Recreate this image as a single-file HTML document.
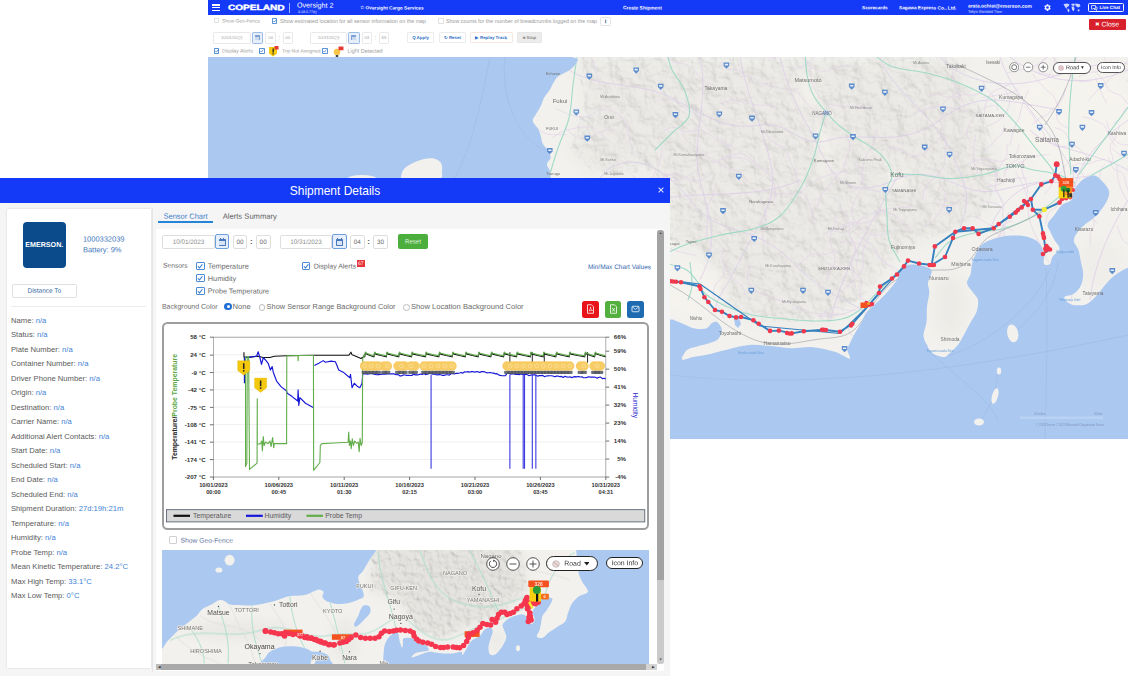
<!DOCTYPE html>
<html lang="en"><head><meta charset="utf-8"><title>Shipment Details</title>
<style>
html,body{margin:0;padding:0;background:#fff;}
body{width:1128px;height:676px;position:relative;overflow:hidden;font-family:"Liberation Sans",sans-serif;}
.t{position:absolute;left:0;top:0;white-space:nowrap;line-height:1;}
.b{position:absolute;display:block;}
svg{overflow:hidden;}
</style></head>
<body>
<!-- background application -->
<div class="b" style="left:208.00px;top:0.00px;width:920.00px;height:15.00px;background:#1439f7;"></div>
<div class="b" style="left:212.00px;top:4.20px;width:8.00px;height:1.50px;background:#fff;"></div>
<div class="b" style="left:212.00px;top:6.90px;width:8.00px;height:1.50px;background:#fff;"></div>
<div class="b" style="left:212.00px;top:9.60px;width:8.00px;height:1.50px;background:#fff;"></div>
<span class="t" style="transform-origin:0 0;transform:translate(228.00px,3.60px) scale(0.1656,0.1250) rotate(0.25deg);font-size:60.80px;color:#fff;font-weight:bold;-webkit-text-stroke:3px #fff;">COPELAND</span>
<div class="b" style="left:288.60px;top:2.50px;width:0.80px;height:10.50px;background:rgba(255,255,255,.6);"></div>
<span class="t" style="transform-origin:0 0;transform:translate(297.00px,1.54px) scale(0.1250,0.1250) rotate(0.25deg);font-size:57.12px;color:#fff;">Oversight 2</span>
<span class="t" style="transform-origin:0 0;transform:translate(298.00px,10.06px) scale(0.1250,0.1250) rotate(0.25deg);font-size:28.80px;color:#e4e9ff;">3.28.5.7782</span>
<span class="t" style="transform-origin:0 0;transform:translate(360.00px,5.33px) scale(0.1250,0.1250) rotate(0.25deg);font-size:38.00px;color:#fff;font-weight:bold;">☆ Oversight Cargo Services</span>
<span class="t" style="transform-origin:0 0;transform:translate(623.00px,5.25px) scale(0.1250,0.1250) rotate(0.25deg);font-size:39.28px;color:#fff;font-weight:bold;">Create Shipment</span>
<span class="t" style="transform-origin:0 0;transform:translate(862.00px,5.35px) scale(0.1250,0.1250) rotate(0.25deg);font-size:37.76px;color:#fff;font-weight:bold;">Scorecards</span>
<span class="t" style="transform-origin:0 0;transform:translate(899.00px,5.35px) scale(0.1250,0.1250) rotate(0.25deg);font-size:37.76px;color:#fff;font-weight:bold;">Sagawa Express Co., Ltd.</span>
<span class="t" style="transform-origin:0 0;transform:translate(968.00px,3.35px) scale(0.1250,0.1250) rotate(0.25deg);font-size:39.28px;color:#fff;font-weight:bold;">arata.ochiai@emerson.com</span>
<span class="t" style="transform-origin:0 0;transform:translate(968.00px,9.75px) scale(0.1250,0.1250) rotate(0.25deg);font-size:28.96px;color:#e8ecff;">Tokyo Standard Time</span>
<svg class="b" style="left:1042.5px;top:3px;width:9px;height:9px" viewBox="0 0 24 24"><path fill="#fff" d="M19.4 13a7.5 7.5 0 0 0 0-2l2.1-1.6-2-3.5-2.5 1a7.6 7.6 0 0 0-1.7-1L15 3h-4l-.4 2.9a7.6 7.6 0 0 0-1.700 1l-2.500-1-2 3.500L6.600 11a7.500 7.500 0 0 0 0 2l-2.100 1.600 2 3.500 2.500-1a7.600 7.600 0 0 0 1.700 1L11 21h4l.4-2.900a7.600 7.600 0 0 0 1.700-1l2.500 1 2-3.500zM13 15.500a3.500 3.500 0 1 1 0-7 3.500 3.500 0 0 1 0 7z" transform="translate(-1,0)"/></svg>
<svg class="b" style="left:1063px;top:3px;width:18px;height:10px" viewBox="0 0 36 20"><g fill="#c9d3ff"><path d="M1 2l8-1 4 2-2 4-3 1-1 4-3-4z"/><path d="M9 11l3 1 1 4-2 3-2-4z"/><path d="M16 2l6-1 2 3-3 2-3-1z"/><path d="M17 7l5 0 1 5-2 5-3-4z"/><path d="M24 1l9 1 2 4-4 3-3-1-3-3z"/><path d="M29 13l4 0 0 3-3 1z"/></g></svg>
<div class="b" style="left:1087.50px;top:2.50px;width:36.50px;height:9.90px;border:0.8px solid #fff;border-radius:1.5px;box-sizing:border-box;"></div>
<span class="t" style="transform-origin:0 0;transform:translate(1099.50px,5.24px) scale(0.1250,0.1250) rotate(0.25deg);font-size:36.40px;color:#fff;font-weight:bold;">Live Chat</span>
<svg class="b" style="left:1091px;top:4.6px;width:6.5px;height:6px" viewBox="0 0 13 12"><path fill="none" stroke="#fff" stroke-width="1.4" d="M1 1h8v6H4l-2 2V7H1zM10 4h2v5h-1v2l-2-2H6"/></svg>
<div class="b" style="left:1088.70px;top:19.00px;width:37.30px;height:10.80px;background:#d7202c;border-radius:1px;"></div>
<span class="t" style="transform-origin:0 0;transform:translate(1095.00px,21.53px) scale(0.1250,0.1250) rotate(0.25deg);font-size:44.00px;color:#fff;">✖</span>
<span class="t" style="transform-origin:0 0;transform:translate(1101.50px,20.80px) scale(0.1250,0.1250) rotate(0.25deg);font-size:54.80px;color:#fff;">Close</span>
<div class="b" style="left:213.80px;top:18.30px;width:5.20px;height:5.20px;border:0.7px solid #e0e0e0;box-sizing:border-box;border-radius:0.8px;background:#fff;"></div>
<span class="t" style="transform-origin:0 0;transform:translate(222.00px,18.36px) scale(0.1250,0.1250) rotate(0.25deg);font-size:39.04px;color:#9a9a9a;">Show Geo-Fence</span>
<div class="b" style="left:271.80px;top:18.30px;width:5.60px;height:5.60px;border:0.7px solid #5b93d8;box-sizing:border-box;border-radius:0.8px;background:#fff;"></div><svg class="b" style="left:271.80px;top:18.30px;width:5.60px;height:5.60px" viewBox="0 0 10 10"><path d="M2.300 5.200l2 2 3.500-4.400" fill="none" stroke="#2f78d0" stroke-width="1.300"/></svg>
<span class="t" style="transform-origin:0 0;transform:translate(280.00px,18.12px) scale(0.1250,0.1250);font-size:42.72px;color:#9a9a9a;">Show estimated location for all sensor information on the map</span>
<div class="b" style="left:438.00px;top:18.30px;width:5.60px;height:5.60px;border:0.7px solid #e0e0e0;box-sizing:border-box;border-radius:0.8px;background:#fff;"></div>
<span class="t" style="transform-origin:0 0;transform:translate(446.00px,18.12px) scale(0.1250,0.1250);font-size:42.72px;color:#9a9a9a;">Show counts for the number of breadcrumbs logged on the map</span>
<div class="b" style="left:600.00px;top:17.00px;width:11.00px;height:9.00px;border:0.6px solid #e3e3e3;border-radius:1.5px;box-sizing:border-box;"></div>
<span class="t" style="transform-origin:50% 0;transform:translate(605.50px,18.26px) translateX(-50%) scale(0.1250,0.1250) rotate(0.25deg);font-size:48.00px;color:#3b5a8c;font-weight:bold;font-family:"Liberation Serif",serif;">i</span>
<div class="b" style="left:213.00px;top:32.00px;width:37.50px;height:11.60px;border:0.6px solid #e9e9e9;border-radius:1.2px;box-sizing:border-box;background:#fff;"></div><span class="t" style="transform-origin:50% 0;transform:translate(231.75px,35.48px) translateX(-50%) scale(0.1250,0.1250) rotate(0.25deg);font-size:34.40px;color:#a5a5a5;">10/01/2023</span>
<div class="b" style="left:251.60px;top:31.50px;width:11.40px;height:12.50px;border:0.7px solid #9dbde6;border-radius:1.2px;box-sizing:border-box;background:#e6eefa;"></div><div class="b" style="left:254.70px;top:35.45px;width:5.20px;height:5.00px;background:#7d9fd4;border-radius:0.6px;"></div><div class="b" style="left:255.30px;top:36.85px;width:4.00px;height:3.00px;background:#c9d9f0;"></div>
<div class="b" style="left:265.40px;top:32.00px;width:10.60px;height:11.60px;border:0.6px solid #e9e9e9;border-radius:1.2px;box-sizing:border-box;background:#fff;"></div><span class="t" style="transform-origin:50% 0;transform:translate(270.70px,35.48px) translateX(-50%) scale(0.1250,0.1250) rotate(0.25deg);font-size:34.40px;color:#a5a5a5;">00</span>
<span class="t" style="transform-origin:50% 0;transform:translate(279.30px,35.10px) translateX(-50%) scale(0.1250,0.1250) rotate(0.25deg);font-size:40.00px;color:#777;">:</span>
<div class="b" style="left:282.50px;top:32.00px;width:10.50px;height:11.60px;border:0.6px solid #e9e9e9;border-radius:1.2px;box-sizing:border-box;background:#fff;"></div><span class="t" style="transform-origin:50% 0;transform:translate(287.75px,35.48px) translateX(-50%) scale(0.1250,0.1250) rotate(0.25deg);font-size:34.40px;color:#a5a5a5;">00</span>
<div class="b" style="left:309.70px;top:32.00px;width:37.70px;height:11.60px;border:0.6px solid #e9e9e9;border-radius:1.2px;box-sizing:border-box;background:#fff;"></div><span class="t" style="transform-origin:50% 0;transform:translate(328.55px,35.48px) translateX(-50%) scale(0.1250,0.1250) rotate(0.25deg);font-size:34.40px;color:#a5a5a5;">10/31/2023</span>
<div class="b" style="left:348.00px;top:31.50px;width:11.50px;height:12.50px;border:0.7px solid #9dbde6;border-radius:1.2px;box-sizing:border-box;background:#e6eefa;"></div><div class="b" style="left:351.15px;top:35.45px;width:5.20px;height:5.00px;background:#7d9fd4;border-radius:0.6px;"></div><div class="b" style="left:351.75px;top:36.85px;width:4.00px;height:3.00px;background:#c9d9f0;"></div>
<div class="b" style="left:361.60px;top:32.00px;width:10.40px;height:11.60px;border:0.6px solid #e9e9e9;border-radius:1.2px;box-sizing:border-box;background:#fff;"></div><span class="t" style="transform-origin:50% 0;transform:translate(366.80px,35.48px) translateX(-50%) scale(0.1250,0.1250) rotate(0.25deg);font-size:34.40px;color:#a5a5a5;">03</span>
<span class="t" style="transform-origin:50% 0;transform:translate(375.50px,35.10px) translateX(-50%) scale(0.1250,0.1250) rotate(0.25deg);font-size:40.00px;color:#777;">:</span>
<div class="b" style="left:379.00px;top:32.00px;width:10.00px;height:11.60px;border:0.6px solid #e9e9e9;border-radius:1.2px;box-sizing:border-box;background:#fff;"></div><span class="t" style="transform-origin:50% 0;transform:translate(384.00px,35.48px) translateX(-50%) scale(0.1250,0.1250) rotate(0.25deg);font-size:34.40px;color:#a5a5a5;">59</span>
<div class="b" style="left:407.00px;top:32.00px;width:27.00px;height:11.30px;border:0.6px solid #ebebeb;border-radius:1.2px;box-sizing:border-box;background:#fff;"></div><span class="t" style="transform-origin:50% 0;transform:translate(420.50px,35.32px) translateX(-50%) scale(0.1250,0.1250) rotate(0.25deg);font-size:35.20px;color:#2f6fc4;font-weight:bold;">Q Apply</span>
<div class="b" style="left:439.00px;top:32.00px;width:27.00px;height:11.30px;border:0.6px solid #ebebeb;border-radius:1.2px;box-sizing:border-box;background:#fff;"></div><span class="t" style="transform-origin:50% 0;transform:translate(452.50px,35.32px) translateX(-50%) scale(0.1250,0.1250) rotate(0.25deg);font-size:35.20px;color:#2f6fc4;font-weight:bold;">↻ Reset</span>
<div class="b" style="left:470.00px;top:32.00px;width:42.50px;height:11.30px;border:0.6px solid #f5e6e0;border-radius:1.2px;box-sizing:border-box;background:#fff;"></div><span class="t" style="transform-origin:50% 0;transform:translate(491.25px,35.32px) translateX(-50%) scale(0.1250,0.1250) rotate(0.25deg);font-size:35.20px;color:#2f6fc4;font-weight:bold;">▶ Replay Track</span>
<div class="b" style="left:517.00px;top:32.00px;width:25.00px;height:11.30px;border:0.6px solid #e6e6e6;border-radius:1.2px;box-sizing:border-box;background:#ececec;"></div><span class="t" style="transform-origin:50% 0;transform:translate(529.50px,35.32px) translateX(-50%) scale(0.1250,0.1250) rotate(0.25deg);font-size:35.20px;color:#8a8a8a;font-weight:bold;">■ Stop</span>
<div class="b" style="left:213.60px;top:48.30px;width:5.60px;height:5.60px;border:0.7px solid #5b93d8;box-sizing:border-box;border-radius:0.8px;background:#fff;"></div><svg class="b" style="left:213.60px;top:48.30px;width:5.60px;height:5.60px" viewBox="0 0 10 10"><path d="M2.300 5.200l2 2 3.500-4.400" fill="none" stroke="#2f78d0" stroke-width="1.300"/></svg>
<span class="t" style="transform-origin:0 0;transform:translate(222.00px,48.24px) scale(0.1250,0.1250) rotate(0.25deg);font-size:40.96px;color:#9a9a9a;">Display Alerts</span>
<div class="b" style="left:259.00px;top:48.30px;width:5.60px;height:5.60px;border:0.7px solid #5b93d8;box-sizing:border-box;border-radius:0.8px;background:#fff;"></div><svg class="b" style="left:259.00px;top:48.30px;width:5.60px;height:5.60px" viewBox="0 0 10 10"><path d="M2.300 5.200l2 2 3.500-4.400" fill="none" stroke="#2f78d0" stroke-width="1.300"/></svg>
<svg class="b" style="left:267.500px;top:46.200px;width:11px;height:11.500px" viewBox="0 0 22 23"><path d="M2 2h16v13l-8 6-8-6z" fill="#f5c90f"/><rect x="9" y="5" width="2.600" height="8" fill="#222"/><rect x="9" y="14.500" width="2.600" height="2.400" fill="#222"/><rect x="13" y="0" width="8" height="7" fill="#e53935"/></svg>
<span class="t" style="transform-origin:0 0;transform:translate(282.00px,48.35px) scale(0.1250,0.1250) rotate(0.25deg);font-size:39.20px;color:#9a9a9a;">Trip Not Assigned</span>
<div class="b" style="left:322.00px;top:48.30px;width:5.60px;height:5.60px;border:0.7px solid #5b93d8;box-sizing:border-box;border-radius:0.8px;background:#fff;"></div><svg class="b" style="left:322.00px;top:48.30px;width:5.60px;height:5.60px" viewBox="0 0 10 10"><path d="M2.300 5.200l2 2 3.500-4.400" fill="none" stroke="#2f78d0" stroke-width="1.300"/></svg>
<svg class="b" style="left:331.500px;top:45.800px;width:12px;height:12.500px" viewBox="0 0 24 25"><circle cx="10" cy="12" r="6.500" fill="#f7c64a"/><rect x="7.500" y="18" width="5" height="4.500" fill="#444"/><rect x="13" y="1" width="10" height="7.500" rx="1" fill="#e53935"/></svg>
<span class="t" style="transform-origin:0 0;transform:translate(347.50px,48.07px) scale(0.1250,0.1250) rotate(0.25deg);font-size:43.44px;color:#9a9a9a;">Light Detected</span>
<!-- main map -->
<svg class="b" style="left:208px;top:57px;width:920px;height:382px" viewBox="208 57 920 382">
<defs><filter id="bl" x="-20%" y="-20%" width="140%" height="140%"><feGaussianBlur stdDeviation="7"/></filter><filter id="bl2" x="-20%" y="-20%" width="140%" height="140%"><feGaussianBlur stdDeviation="3"/></filter>
<filter id="relief" x="0" y="0" width="100%" height="100%"><feTurbulence type="fractalNoise" baseFrequency="0.07" numOctaves="4" seed="7" result="n"/><feDiffuseLighting in="n" surfaceScale="5" lighting-color="#fff" result="l"><feDistantLight azimuth="315" elevation="62"/></feDiffuseLighting><feComposite in="l" in2="SourceGraphic" operator="in"/></filter>
<clipPath id="landclip"><path d="M584.0 40.0C679.3 35.0 1055.7 -7.0 1150.0 30.0C1244.3 67.0 1153.7 222.4 1150.0 262.0C1146.3 301.6 1134.0 265.4 1128.0 267.7C1122.0 270.0 1117.9 273.0 1114.0 276.0C1110.1 279.0 1107.8 281.9 1104.6 285.5C1101.4 289.1 1098.2 294.2 1095.0 297.3C1091.8 300.4 1089.5 303.2 1085.6 304.4C1081.7 305.6 1075.0 305.6 1071.4 304.4C1067.9 303.2 1063.9 299.1 1064.3 297.3C1064.7 295.5 1071.0 295.8 1073.8 293.8C1076.6 291.8 1079.3 288.9 1080.9 285.5C1082.5 282.1 1083.2 277.6 1083.2 273.7C1083.2 269.8 1081.7 265.8 1080.9 261.8C1080.1 257.9 1079.7 253.6 1078.5 250.0C1077.3 246.4 1073.8 243.7 1073.8 240.5C1073.8 237.3 1076.5 233.8 1078.5 231.0C1080.5 228.2 1082.8 226.4 1085.6 224.0C1088.3 221.6 1091.8 220.0 1095.0 216.8C1098.2 213.6 1102.2 209.0 1104.6 205.0C1107.0 201.0 1109.3 196.6 1109.3 193.0C1109.3 189.4 1107.0 186.6 1104.6 183.7C1102.2 180.8 1098.2 176.4 1095.0 175.4C1091.8 174.4 1088.3 176.4 1085.6 177.8C1082.8 179.2 1080.5 181.5 1078.5 183.7C1076.5 185.9 1075.0 188.1 1073.8 190.8C1072.6 193.5 1073.4 197.6 1071.4 200.0C1069.4 202.4 1064.8 202.6 1062.0 205.0C1059.2 207.4 1057.2 211.3 1054.8 214.5C1052.4 217.7 1048.5 221.2 1047.7 224.0C1046.9 226.8 1048.8 228.2 1050.0 231.0C1051.2 233.8 1053.2 237.5 1054.8 240.5C1056.4 243.5 1060.0 246.1 1059.6 248.8C1059.2 251.6 1054.0 254.5 1052.4 257.0C1050.8 259.5 1051.4 262.8 1050.0 264.0C1048.6 265.2 1045.0 265.6 1044.0 264.0C1043.0 262.4 1044.6 257.9 1044.0 254.7C1043.4 251.5 1042.3 247.6 1040.6 245.0C1038.8 242.4 1036.7 240.5 1033.5 239.0C1030.3 237.5 1026.0 236.3 1021.7 235.8C1017.4 235.3 1012.3 235.3 1007.5 235.8C1002.7 236.3 997.4 237.5 993.0 239.0C988.6 240.5 984.3 242.4 981.4 245.0C978.5 247.6 977.1 251.5 975.5 254.7C973.9 257.9 972.8 260.8 972.0 264.0C971.2 267.2 971.5 270.5 970.7 273.7C969.9 276.9 966.6 279.9 967.0 283.0C967.4 286.1 971.2 289.8 973.0 292.6C974.8 295.4 977.3 296.6 977.9 299.7C978.5 302.8 977.7 308.1 976.7 311.5C975.7 314.9 973.6 317.1 972.0 320.0C970.4 322.9 969.2 325.1 967.0 329.0C964.8 332.9 961.6 339.7 958.8 343.7C956.0 347.7 952.5 350.8 950.0 353.0C947.5 355.2 947.0 357.0 944.0 357.0C941.0 357.0 934.8 355.0 932.0 353.0C929.2 351.0 928.4 347.9 927.0 345.0C925.6 342.1 923.6 339.2 923.5 335.4C923.4 331.6 925.9 326.8 926.5 322.0C927.1 317.2 926.5 311.7 927.0 306.8C927.5 301.9 929.1 296.6 929.3 292.6C929.5 288.6 927.6 286.6 928.0 283.0C928.4 279.4 932.2 273.8 931.7 271.0C931.2 268.2 927.8 267.6 925.0 266.5C922.2 265.4 918.2 264.7 915.0 264.5C911.8 264.3 908.4 264.4 906.0 265.5C903.6 266.6 902.4 268.4 900.7 271.0C899.0 273.6 898.2 277.8 896.0 281.3C893.8 284.8 890.6 288.4 887.4 292.0C884.2 295.6 880.4 299.1 876.8 302.6C873.2 306.1 868.5 310.0 866.0 313.2C863.5 316.4 863.6 318.5 861.9 321.7C860.1 324.9 857.3 329.1 855.5 332.3C853.7 335.5 852.3 338.0 851.0 340.9C849.7 343.8 847.7 346.5 847.5 349.4C847.3 352.3 850.9 357.6 850.0 358.5C849.1 359.4 844.7 356.2 842.0 355.0C839.3 353.8 838.8 352.8 834.0 351.5C829.2 350.2 820.0 347.7 813.0 347.2C806.0 346.7 798.8 348.5 791.7 348.3C784.6 348.1 777.5 346.6 770.4 346.0C763.3 345.4 756.1 344.4 749.0 345.0C741.9 345.6 734.9 347.8 727.8 349.4C720.7 351.0 712.3 353.4 706.5 354.7C700.7 356.0 697.1 356.2 693.0 357.0C688.9 357.8 683.0 360.7 682.0 359.5C681.0 358.3 684.5 352.2 687.0 350.0C689.5 347.8 693.8 347.5 697.0 346.5C700.2 345.5 703.2 345.1 706.5 344.0C709.8 342.9 714.6 341.7 717.0 340.0C719.4 338.3 720.3 336.0 721.0 334.0C721.7 332.0 722.1 330.0 721.4 328.0C720.7 326.0 718.6 322.8 717.0 322.0C715.4 321.2 713.7 322.0 712.0 323.0C710.3 324.0 709.0 327.0 707.0 328.0C705.0 329.0 702.5 329.1 700.0 329.0C697.5 328.9 694.5 328.6 691.7 327.7C688.9 326.8 685.6 324.9 683.0 323.8C680.4 322.7 678.1 321.7 676.0 321.0C673.9 320.3 674.7 319.4 670.4 319.6C666.1 319.8 655.1 331.9 650.0 322.0C644.9 312.1 648.3 277.8 640.0 260.0C631.7 242.2 614.5 225.0 600.0 215.0C585.5 205.0 561.2 206.9 553.0 200.0C544.8 193.1 551.6 179.5 550.6 173.6C549.6 167.7 547.0 167.4 547.0 164.7C547.0 162.0 550.4 160.0 550.6 157.6C550.8 155.2 549.3 152.9 548.0 150.5C546.7 148.1 543.8 145.8 542.6 143.4C541.4 141.0 541.5 138.4 540.8 136.0C540.1 133.6 539.5 131.5 538.2 129.0C536.9 126.5 533.2 123.3 532.8 121.0C532.3 118.7 534.2 117.5 535.5 115.0C536.8 112.5 539.3 109.0 540.8 106.0C542.3 103.0 542.9 100.0 544.4 97.3C545.9 94.6 548.2 92.4 549.7 90.0C551.2 87.6 551.8 85.3 553.3 83.0C554.8 80.7 555.6 78.3 558.6 76.0C561.6 73.7 567.8 71.6 571.0 68.9C574.2 66.2 575.8 64.8 578.0 60.0C580.2 55.2 488.7 45.0 584.0 40.0Z"/></clipPath></defs>
<rect x="208" y="57" width="920" height="382" fill="#abc8f0"/>
<g fill="none" stroke="#9ab9e6" stroke-width="0.6" opacity=".8"><path d="M505 57C500 100 520 140 545 150"/><path d="M490 57C480 110 470 150 455 178"/><path d="M930 352C960 380 990 400 998 420"/><path d="M946 356C990 345 1040 300 1050 268"/><path d="M1012 335C1040 310 1055 290 1058 262"/><path d="M998 371L994 398L980 422"/><path d="M670 375C760 385 900 385 1128 335"/><path d="M1046 268C1048 330 1046 400 1045 439"/></g>
<path d="M584.0 40.0C679.3 35.0 1055.7 -7.0 1150.0 30.0C1244.3 67.0 1153.7 222.4 1150.0 262.0C1146.3 301.6 1134.0 265.4 1128.0 267.7C1122.0 270.0 1117.9 273.0 1114.0 276.0C1110.1 279.0 1107.8 281.9 1104.6 285.5C1101.4 289.1 1098.2 294.2 1095.0 297.3C1091.8 300.4 1089.5 303.2 1085.6 304.4C1081.7 305.6 1075.0 305.6 1071.4 304.4C1067.9 303.2 1063.9 299.1 1064.3 297.3C1064.7 295.5 1071.0 295.8 1073.8 293.8C1076.6 291.8 1079.3 288.9 1080.9 285.5C1082.5 282.1 1083.2 277.6 1083.2 273.7C1083.2 269.8 1081.7 265.8 1080.9 261.8C1080.1 257.9 1079.7 253.6 1078.5 250.0C1077.3 246.4 1073.8 243.7 1073.8 240.5C1073.8 237.3 1076.5 233.8 1078.5 231.0C1080.5 228.2 1082.8 226.4 1085.6 224.0C1088.3 221.6 1091.8 220.0 1095.0 216.8C1098.2 213.6 1102.2 209.0 1104.6 205.0C1107.0 201.0 1109.3 196.6 1109.3 193.0C1109.3 189.4 1107.0 186.6 1104.6 183.7C1102.2 180.8 1098.2 176.4 1095.0 175.4C1091.8 174.4 1088.3 176.4 1085.6 177.8C1082.8 179.2 1080.5 181.5 1078.5 183.7C1076.5 185.9 1075.0 188.1 1073.8 190.8C1072.6 193.5 1073.4 197.6 1071.4 200.0C1069.4 202.4 1064.8 202.6 1062.0 205.0C1059.2 207.4 1057.2 211.3 1054.8 214.5C1052.4 217.7 1048.5 221.2 1047.7 224.0C1046.9 226.8 1048.8 228.2 1050.0 231.0C1051.2 233.8 1053.2 237.5 1054.8 240.5C1056.4 243.5 1060.0 246.1 1059.6 248.8C1059.2 251.6 1054.0 254.5 1052.4 257.0C1050.8 259.5 1051.4 262.8 1050.0 264.0C1048.6 265.2 1045.0 265.6 1044.0 264.0C1043.0 262.4 1044.6 257.9 1044.0 254.7C1043.4 251.5 1042.3 247.6 1040.6 245.0C1038.8 242.4 1036.7 240.5 1033.5 239.0C1030.3 237.5 1026.0 236.3 1021.7 235.8C1017.4 235.3 1012.3 235.3 1007.5 235.8C1002.7 236.3 997.4 237.5 993.0 239.0C988.6 240.5 984.3 242.4 981.4 245.0C978.5 247.6 977.1 251.5 975.5 254.7C973.9 257.9 972.8 260.8 972.0 264.0C971.2 267.2 971.5 270.5 970.7 273.7C969.9 276.9 966.6 279.9 967.0 283.0C967.4 286.1 971.2 289.8 973.0 292.6C974.8 295.4 977.3 296.6 977.9 299.7C978.5 302.8 977.7 308.1 976.7 311.5C975.7 314.9 973.6 317.1 972.0 320.0C970.4 322.9 969.2 325.1 967.0 329.0C964.8 332.9 961.6 339.7 958.8 343.7C956.0 347.7 952.5 350.8 950.0 353.0C947.5 355.2 947.0 357.0 944.0 357.0C941.0 357.0 934.8 355.0 932.0 353.0C929.2 351.0 928.4 347.9 927.0 345.0C925.6 342.1 923.6 339.2 923.5 335.4C923.4 331.6 925.9 326.8 926.5 322.0C927.1 317.2 926.5 311.7 927.0 306.8C927.5 301.9 929.1 296.6 929.3 292.6C929.5 288.6 927.6 286.6 928.0 283.0C928.4 279.4 932.2 273.8 931.7 271.0C931.2 268.2 927.8 267.6 925.0 266.5C922.2 265.4 918.2 264.7 915.0 264.5C911.8 264.3 908.4 264.4 906.0 265.5C903.6 266.6 902.4 268.4 900.7 271.0C899.0 273.6 898.2 277.8 896.0 281.3C893.8 284.8 890.6 288.4 887.4 292.0C884.2 295.6 880.4 299.1 876.8 302.6C873.2 306.1 868.5 310.0 866.0 313.2C863.5 316.4 863.6 318.5 861.9 321.7C860.1 324.9 857.3 329.1 855.5 332.3C853.7 335.5 852.3 338.0 851.0 340.9C849.7 343.8 847.7 346.5 847.5 349.4C847.3 352.3 850.9 357.6 850.0 358.5C849.1 359.4 844.7 356.2 842.0 355.0C839.3 353.8 838.8 352.8 834.0 351.5C829.2 350.2 820.0 347.7 813.0 347.2C806.0 346.7 798.8 348.5 791.7 348.3C784.6 348.1 777.5 346.6 770.4 346.0C763.3 345.4 756.1 344.4 749.0 345.0C741.9 345.6 734.9 347.8 727.8 349.4C720.7 351.0 712.3 353.4 706.5 354.7C700.7 356.0 697.1 356.2 693.0 357.0C688.9 357.8 683.0 360.7 682.0 359.5C681.0 358.3 684.5 352.2 687.0 350.0C689.5 347.8 693.8 347.5 697.0 346.5C700.2 345.5 703.2 345.1 706.5 344.0C709.8 342.9 714.6 341.7 717.0 340.0C719.4 338.3 720.3 336.0 721.0 334.0C721.7 332.0 722.1 330.0 721.4 328.0C720.7 326.0 718.6 322.8 717.0 322.0C715.4 321.2 713.7 322.0 712.0 323.0C710.3 324.0 709.0 327.0 707.0 328.0C705.0 329.0 702.5 329.1 700.0 329.0C697.5 328.9 694.5 328.6 691.7 327.7C688.9 326.8 685.6 324.9 683.0 323.8C680.4 322.7 678.1 321.7 676.0 321.0C673.9 320.3 674.7 319.4 670.4 319.6C666.1 319.8 655.1 331.9 650.0 322.0C644.9 312.1 648.3 277.8 640.0 260.0C631.7 242.2 614.5 225.0 600.0 215.0C585.5 205.0 561.2 206.9 553.0 200.0C544.8 193.1 551.6 179.5 550.6 173.6C549.6 167.7 547.0 167.4 547.0 164.7C547.0 162.0 550.4 160.0 550.6 157.6C550.8 155.2 549.3 152.9 548.0 150.5C546.7 148.1 543.8 145.8 542.6 143.4C541.4 141.0 541.5 138.4 540.8 136.0C540.1 133.6 539.5 131.5 538.2 129.0C536.9 126.5 533.2 123.3 532.8 121.0C532.3 118.7 534.2 117.5 535.5 115.0C536.8 112.5 539.3 109.0 540.8 106.0C542.3 103.0 542.9 100.0 544.4 97.3C545.9 94.6 548.2 92.4 549.7 90.0C551.2 87.6 551.8 85.3 553.3 83.0C554.8 80.7 555.6 78.3 558.6 76.0C561.6 73.7 567.8 71.6 571.0 68.9C574.2 66.2 575.8 64.8 578.0 60.0C580.2 55.2 488.7 45.0 584.0 40.0Z" fill="#f2f1ed"/>
<g clip-path="url(#landclip)">
<g filter="url(#bl)" fill="#ebeae6" opacity=".95">
<path d="M575 57L960 57L985 120L1000 170L985 215L940 235L900 250L870 290L830 322L760 322L715 300L700 255L670 240L655 170L600 178L570 150L585 100Z"/>
<ellipse cx="950" cy="305" rx="14" ry="30"/>
<ellipse cx="1100" cy="265" rx="18" ry="22" opacity=".5"/>
</g>
<g opacity=".26" style="mix-blend-mode:multiply"><path filter="url(#relief)" d="M575 57L960 57L985 120L1000 170L985 215L940 235L900 250L870 290L830 322L760 322L715 300L700 255L670 240L655 170L600 178L570 150L585 100Z" fill="#000"/></g>
<g filter="url(#bl)" fill="#f5f3ee"><ellipse cx="1075" cy="120" rx="60" ry="60"/><ellipse cx="897" cy="178" rx="14" ry="10"/><ellipse cx="808" cy="90" rx="8" ry="22"/><ellipse cx="690" cy="290" rx="35" ry="28"/><ellipse cx="826" cy="150" rx="6" ry="30"/></g>
<g fill="none" stroke="#e3d2e8" stroke-width="0.750" opacity=".9">
<path d="M817.0 209.8C817.4 207.8 818.0 201.6 819.7 198.0C821.4 194.4 824.6 191.6 827.0 188.3C829.5 185.0 831.5 181.5 834.1 178.4C836.7 175.3 840.5 173.1 842.6 169.7C844.7 166.3 845.4 162.1 846.6 158.2C847.8 154.4 849.8 150.4 849.8 146.5C849.9 142.6 847.4 136.6 846.9 134.7"/>
<path d="M866.0 300.1C864.3 301.5 859.8 306.5 856.1 308.7C852.4 311.0 848.0 312.5 843.9 313.7C839.7 314.9 835.2 315.6 830.9 315.9C826.5 316.3 819.9 316.0 817.7 316.0"/>
<path d="M1032.4 74.2C1033.5 75.6 1036.8 79.5 1039.1 82.1C1041.4 84.6 1043.8 87.2 1046.2 89.6C1048.7 92.0 1052.1 93.7 1053.9 96.5C1055.8 99.2 1057.0 104.5 1057.6 106.1"/>
<path d="M854.9 231.8C856.0 232.8 859.1 236.1 861.5 238.0C863.8 239.9 866.4 241.4 868.8 243.2C871.2 245.0 874.2 246.6 875.8 249.0C877.3 251.4 876.7 255.2 878.2 257.7C879.8 260.1 882.5 262.0 885.1 263.6C887.6 265.1 891.0 265.3 893.5 266.8C896.0 268.4 899.1 271.8 900.2 272.8"/>
<path d="M851.3 65.1C848.9 65.5 841.8 66.1 837.1 67.1C832.4 68.2 827.9 71.5 823.4 71.4C818.8 71.3 813.7 69.1 809.8 66.6C806.0 64.0 804.1 58.0 800.1 56.0C796.1 53.9 790.6 53.8 785.9 54.1C781.2 54.5 776.7 58.1 772.1 58.1C767.5 58.0 762.9 55.2 758.3 53.9C753.7 52.6 746.7 50.9 744.4 50.2"/>
<path d="M1116.8 165.5C1117.0 167.7 1117.0 174.2 1117.9 178.4C1118.7 182.6 1120.0 186.9 1121.8 190.8C1123.6 194.7 1125.6 199.2 1128.8 201.7C1132.0 204.2 1139.0 205.1 1141.1 205.8"/>
<path d="M792.9 308.9C794.7 309.0 800.2 308.4 803.6 309.1C807.0 309.9 810.0 312.9 813.4 313.7C816.8 314.4 820.5 313.4 824.1 313.5C827.7 313.6 831.2 314.1 834.8 314.2C838.4 314.3 843.7 314.1 845.5 314.1"/>
<path d="M668.3 256.8C667.0 258.3 663.9 264.1 660.7 266.0C657.5 267.9 652.2 266.3 649.0 268.3C645.8 270.2 644.6 275.3 641.5 277.5C638.4 279.8 634.1 281.8 630.4 282.0C626.6 282.2 620.8 279.2 618.9 278.6"/>
<path d="M896.7 329.4C895.0 329.7 889.8 330.9 886.3 331.2C882.9 331.4 879.1 330.0 875.9 330.9C872.6 331.7 870.1 335.5 866.8 336.2C863.6 336.8 858.2 334.8 856.5 334.5"/>
<path d="M681.1 127.5C681.7 129.3 682.5 135.3 684.5 138.3C686.5 141.3 690.5 142.9 693.2 145.5C696.0 148.0 698.1 151.5 701.1 153.6C704.1 155.8 708.0 156.7 711.3 158.5C714.5 160.4 717.4 163.0 720.7 164.8C723.9 166.6 727.5 167.9 731.0 169.3C734.5 170.7 738.9 170.9 741.7 173.1C744.5 175.3 746.9 181.0 747.9 182.5"/>
<path d="M834.8 213.9C834.8 215.6 835.7 220.9 835.1 224.1C834.4 227.4 831.7 230.3 830.9 233.5C830.1 236.8 829.8 240.5 830.3 243.8C830.8 247.1 833.3 250.1 834.0 253.4C834.7 256.7 835.2 260.5 834.4 263.7C833.5 266.8 829.9 269.1 828.7 272.2C827.5 275.4 827.4 280.7 827.1 282.4"/>
<path d="M1099.7 297.8C1101.2 297.4 1105.8 296.2 1108.9 295.5C1112.0 294.7 1115.3 294.5 1118.2 293.3C1121.1 292.1 1123.4 289.3 1126.2 288.1C1129.1 286.8 1132.5 286.8 1135.5 285.8C1138.5 284.8 1141.5 283.6 1144.3 282.2C1147.2 280.8 1149.7 278.3 1152.7 277.6C1155.7 276.9 1159.1 278.0 1162.2 278.2C1165.4 278.4 1170.2 278.6 1171.8 278.7"/>
<path d="M855.4 310.7C853.8 310.5 848.8 310.4 845.6 309.8C842.3 309.3 839.1 307.3 836.0 307.4C832.8 307.6 829.4 309.1 826.7 310.8C823.9 312.5 820.7 316.4 819.5 317.6"/>
<path d="M1079.7 261.5C1078.6 263.0 1074.8 267.1 1073.4 270.4C1072.1 273.6 1071.9 277.5 1071.7 281.1C1071.4 284.7 1072.0 288.4 1071.9 292.0C1071.8 295.6 1071.2 301.0 1071.1 302.8"/>
<path d="M634.7 155.9C633.9 153.4 631.1 145.9 629.8 140.8C628.4 135.7 628.9 129.9 626.7 125.2C624.4 120.6 620.7 115.7 616.4 113.1C612.1 110.5 605.9 109.1 600.9 109.7C596.0 110.3 591.7 115.9 586.7 116.7C581.7 117.6 576.0 116.2 570.9 114.9C565.9 113.5 558.7 109.7 556.3 108.7"/>
<path d="M1106.9 62.8C1106.1 60.9 1102.4 55.2 1102.3 51.3C1102.2 47.4 1106.1 43.5 1106.2 39.6C1106.3 35.6 1103.9 31.6 1102.9 27.6C1101.9 23.6 1100.8 17.5 1100.4 15.5"/>
<path d="M978.6 302.8C980.4 301.1 985.4 295.7 989.4 292.9C993.3 290.2 997.7 287.1 1002.2 286.2C1006.8 285.2 1012.3 285.8 1016.8 287.3C1021.2 288.9 1024.6 293.0 1028.8 295.5C1032.9 298.0 1039.5 301.1 1041.7 302.3"/>
<path d="M1009.0 292.7C1008.0 291.6 1005.5 287.3 1003.0 285.9C1000.5 284.5 996.9 284.0 994.0 284.4C991.2 284.7 988.0 286.3 985.8 288.2C983.6 290.1 981.7 293.1 980.9 295.8C980.0 298.6 980.2 302.0 980.6 304.9C981.1 307.9 982.3 310.8 983.4 313.6C984.5 316.4 985.6 319.3 987.2 321.9C988.8 324.5 991.9 327.9 992.8 329.0"/>
<path d="M1090.7 246.5C1090.6 244.5 1089.7 238.3 1090.3 234.4C1090.9 230.5 1094.2 226.8 1094.2 223.0C1094.1 219.2 1091.2 215.4 1090.2 211.6C1089.1 207.7 1088.7 203.6 1087.9 199.7C1087.0 195.8 1086.8 191.5 1085.2 187.9C1083.6 184.3 1080.2 181.5 1078.4 177.9C1076.6 174.3 1075.2 168.4 1074.6 166.5"/>
<path d="M842.4 224.8C844.2 224.4 849.4 222.8 853.0 222.5C856.6 222.2 860.3 223.6 863.8 223.0C867.2 222.4 870.9 221.0 873.8 219.0C876.7 217.0 878.1 212.8 881.0 211.0C884.0 209.2 887.9 208.7 891.5 208.2C895.0 207.6 898.6 208.0 902.2 207.7C905.8 207.4 911.2 206.5 912.9 206.3"/>
<path d="M1066.5 146.3C1064.8 146.3 1059.3 147.3 1056.1 146.3C1052.9 145.4 1049.6 143.2 1047.4 140.7C1045.2 138.2 1044.5 134.3 1042.7 131.4C1040.9 128.4 1038.5 125.9 1036.6 123.0C1034.8 120.1 1033.6 116.7 1031.6 113.9C1029.5 111.1 1025.6 107.7 1024.4 106.4"/>
<path d="M637.3 192.5C639.2 191.2 645.7 187.8 648.7 184.3C651.6 180.9 653.1 176.1 655.1 171.9C657.1 167.7 659.6 163.6 660.7 159.1C661.9 154.7 661.9 147.5 662.1 145.2"/>
<path d="M681.6 170.0C680.0 171.3 675.6 176.6 672.0 177.9C668.3 179.2 663.6 177.9 659.5 178.0C655.4 178.2 650.8 177.5 647.1 179.0C643.4 180.4 639.5 183.4 637.3 186.7C635.2 190.1 636.3 195.3 634.3 198.8C632.4 202.4 627.4 204.3 625.7 207.8C624.0 211.4 625.3 216.2 624.2 220.2C623.1 224.2 620.0 229.7 619.2 231.6"/>
<path d="M884.1 141.4C885.2 142.4 887.9 146.6 890.5 147.9C893.1 149.1 896.8 148.0 899.6 149.0C902.4 150.0 904.4 152.9 907.2 154.1C909.9 155.2 913.2 156.1 916.1 156.0C919.0 155.9 922.5 155.1 924.9 153.5C927.3 151.8 928.4 148.5 930.4 146.2C932.5 144.0 935.0 142.2 937.2 140.1C939.4 138.0 942.4 134.6 943.5 133.5"/>
<path d="M917.8 235.8C915.9 234.1 910.1 228.7 906.2 225.3C902.3 221.8 898.8 217.4 894.2 215.1C889.7 212.7 883.9 210.7 879.0 211.2C874.1 211.6 869.5 215.4 864.7 217.7C860.0 220.0 855.7 223.2 850.7 224.8C845.8 226.5 837.8 227.1 835.3 227.5"/>
<path d="M661.7 131.4C663.7 130.7 669.8 127.1 673.8 127.2C677.8 127.2 681.6 131.2 685.8 131.7C689.9 132.2 694.3 129.7 698.4 130.2C702.5 130.8 706.7 132.8 710.3 134.9C714.0 137.0 716.7 140.8 720.5 142.6C724.2 144.5 730.8 145.4 732.8 146.0"/>
<path d="M793.2 300.7C791.5 300.9 786.4 302.4 783.3 301.8C780.2 301.3 777.5 298.7 774.4 297.5C771.4 296.3 768.0 295.8 764.9 294.7C761.8 293.6 758.3 292.9 755.7 291.0C753.2 289.1 751.1 286.1 749.7 283.1C748.2 280.2 747.1 276.7 747.3 273.5C747.5 270.4 750.3 265.9 750.9 264.3"/>
<path d="M823.4 234.8C824.9 234.1 829.2 231.2 832.2 230.8C835.3 230.4 838.7 232.8 841.8 232.5C844.9 232.2 848.1 230.7 850.9 229.1C853.6 227.5 855.9 225.0 858.2 222.7C860.4 220.4 863.4 216.5 864.4 215.3"/>
<path d="M609.9 141.6C608.5 140.4 604.3 137.0 601.6 134.7C598.8 132.4 596.5 128.9 593.3 127.7C590.1 126.4 586.0 126.9 582.5 127.1C578.9 127.3 575.3 128.1 571.8 129.0C568.3 129.8 564.6 130.4 561.4 131.9C558.1 133.4 553.9 137.0 552.4 138.0"/>
<path d="M1082.4 116.6C1084.4 117.1 1090.3 118.2 1094.0 119.8C1097.7 121.3 1101.8 123.0 1104.4 125.8C1107.0 128.6 1107.8 133.0 1109.7 136.6C1111.5 140.1 1114.5 145.3 1115.5 147.1"/>
<path d="M1127.9 302.9C1128.5 300.4 1130.3 293.2 1131.5 288.4C1132.7 283.6 1132.5 278.0 1134.9 273.9C1137.4 269.9 1143.6 268.2 1146.2 264.2C1148.8 260.2 1149.9 254.8 1150.3 250.0C1150.8 245.1 1149.2 240.1 1148.7 235.2C1148.3 230.2 1148.7 225.1 1147.7 220.3C1146.6 215.5 1143.4 211.2 1142.4 206.4C1141.4 201.6 1141.8 194.0 1141.7 191.5"/>
<path d="M922.9 199.7C923.1 197.9 923.1 192.2 924.4 189.0C925.8 185.8 928.6 183.2 931.0 180.5C933.4 177.8 936.6 175.9 938.9 173.1C941.1 170.3 943.4 167.2 944.4 163.8C945.4 160.5 944.6 156.6 944.8 153.0C945.1 149.5 946.1 145.8 945.9 142.3C945.7 138.8 944.4 135.3 943.6 131.8C942.8 128.2 941.6 123.0 941.2 121.2"/>
<path d="M793.5 88.2C795.0 89.8 799.5 94.7 802.4 98.0C805.3 101.3 808.0 104.9 811.1 108.0C814.2 111.1 818.5 113.2 821.1 116.6C823.7 120.1 825.7 126.6 826.7 128.6"/>
<path d="M879.7 191.1C878.1 190.9 873.0 191.2 870.3 189.9C867.6 188.6 865.0 186.0 863.5 183.4C862.0 180.7 862.6 177.0 861.4 174.1C860.3 171.2 858.3 168.7 856.6 166.0C854.9 163.3 852.3 159.4 851.4 158.1"/>
<path d="M632.1 175.4C633.9 176.5 638.9 181.3 642.8 182.2C646.7 183.2 651.4 182.2 655.4 181.1C659.4 180.0 662.9 177.1 667.0 175.9C671.0 174.7 675.6 173.3 679.5 174.1C683.4 174.9 686.5 179.7 690.5 180.5C694.4 181.3 699.2 180.4 703.0 178.9C706.9 177.4 711.7 172.9 713.5 171.7"/>
<path d="M566.7 134.6C564.9 134.6 559.6 134.8 556.0 134.6C552.4 134.5 548.6 134.7 545.4 133.5C542.1 132.3 539.3 129.7 536.5 127.4C533.8 125.2 531.0 122.8 528.9 120.0C526.7 117.1 525.0 113.8 523.8 110.5C522.6 107.2 521.9 101.8 521.5 100.1"/>
<path d="M1059.1 63.3C1057.4 61.6 1051.1 57.0 1048.6 52.9C1046.2 48.8 1045.8 43.5 1044.5 38.7C1043.3 34.0 1043.1 28.8 1041.1 24.4C1039.1 20.0 1036.0 15.7 1032.5 12.4C1028.9 9.1 1024.0 7.4 1019.8 4.7C1015.7 2.0 1011.6 -0.7 1007.7 -3.7C1003.8 -6.7 998.5 -11.9 996.7 -13.5"/>
<path d="M637.5 306.7C637.1 309.3 637.3 317.5 635.1 321.9C633.0 326.3 627.4 328.9 624.7 333.1C622.1 337.4 622.6 343.8 619.5 347.5C616.4 351.2 610.9 353.9 606.2 355.1C601.4 356.3 595.7 353.6 590.9 354.8C586.1 355.9 579.6 360.8 577.3 362.0"/>
<path d="M695.9 255.4C694.0 255.0 688.3 253.9 684.5 252.9C680.7 252.0 676.7 251.4 673.2 249.8C669.6 248.3 666.8 244.9 663.2 243.7C659.6 242.4 655.4 242.9 651.6 242.1C647.8 241.2 643.8 240.3 640.5 238.4C637.2 236.5 633.2 231.9 631.8 230.6"/>
<path d="M614.6 212.6C616.5 210.9 622.1 205.7 625.9 202.2C629.8 198.8 633.1 194.6 637.4 192.0C641.7 189.4 647.0 188.3 651.8 186.5C656.6 184.6 661.2 182.2 666.1 181.0C671.1 179.8 676.7 181.0 681.4 179.4C686.2 177.8 692.4 172.8 694.6 171.5"/>
<path d="M600.1 86.0C599.4 83.7 597.4 76.8 596.0 72.3C594.5 67.7 593.9 62.7 591.5 58.6C589.1 54.6 585.6 50.6 581.7 48.2C577.8 45.8 570.2 44.9 567.9 44.2"/>
<path d="M658.0 100.1C660.6 100.1 668.8 98.5 673.5 99.9C678.1 101.4 681.8 106.0 686.1 108.9C690.4 111.8 695.5 113.7 699.2 117.2C702.9 120.6 704.9 125.9 708.4 129.6C711.9 133.3 716.3 136.3 720.3 139.5C724.4 142.7 730.6 147.3 732.7 148.8"/>
<path d="M852.7 174.4C850.8 174.0 845.1 172.1 841.3 172.1C837.5 172.2 833.7 173.6 830.0 174.7C826.3 175.7 822.5 177.0 819.1 178.6C815.6 180.3 812.2 182.4 809.1 184.7C806.0 186.9 803.8 190.8 800.5 192.4C797.1 193.9 792.8 193.7 789.0 194.0C785.1 194.2 780.9 192.8 777.3 193.8C773.8 194.9 769.1 199.0 767.5 200.0"/>
<path d="M1010.1 145.4C1010.6 143.0 1011.8 135.7 1013.2 131.1C1014.7 126.5 1017.4 122.2 1019.0 117.7C1020.6 113.1 1021.2 108.2 1022.8 103.6C1024.4 99.0 1027.6 92.4 1028.6 90.2"/>
<path d="M846.4 325.3C847.3 326.9 849.3 332.3 851.7 334.9C854.1 337.5 858.6 338.3 860.8 341.0C862.9 343.8 862.6 348.4 864.7 351.2C866.8 354.1 870.1 356.3 873.2 358.2C876.2 360.2 879.8 361.3 883.0 363.0C886.3 364.7 891.0 367.4 892.6 368.3"/>
<path d="M770.1 174.8C768.7 173.4 764.8 168.9 761.8 166.4C758.8 163.9 755.2 162.0 751.9 159.9C748.5 157.8 745.3 154.6 741.7 153.9C738.0 153.2 733.8 154.7 730.0 155.7C726.2 156.7 720.7 159.1 718.9 159.8"/>
<path d="M922.8 227.4C924.4 226.4 929.6 224.3 932.2 221.9C934.9 219.5 936.8 216.2 938.8 213.2C940.8 210.2 943.2 207.1 944.2 203.7C945.3 200.3 945.8 196.2 945.0 192.8C944.3 189.5 940.5 185.0 939.6 183.4"/>
<path d="M852.3 192.8C853.9 191.1 860.0 186.6 861.8 182.6C863.5 178.6 862.1 173.3 862.9 168.8C863.6 164.2 864.4 159.4 866.2 155.2C868.0 151.0 871.9 147.8 873.7 143.6C875.5 139.4 876.4 132.3 876.9 130.0"/>
<path d="M788.1 70.8C790.3 70.2 797.1 69.0 801.1 67.2C805.2 65.3 809.0 62.6 812.4 59.7C815.9 56.8 818.6 53.1 821.8 49.9C825.0 46.7 828.6 43.9 831.7 40.7C834.8 37.4 839.0 32.1 840.4 30.4"/>
<path d="M855.7 288.1C855.3 285.9 853.5 279.3 852.8 274.9C852.1 270.5 851.3 265.9 851.7 261.5C852.1 257.1 855.6 252.8 855.4 248.6C855.3 244.3 851.5 238.0 850.7 235.9"/>
<path d="M1088.3 100.7C1090.1 98.7 1095.0 92.5 1098.8 88.8C1102.5 85.1 1106.9 82.1 1110.7 78.5C1114.5 74.9 1118.0 70.9 1121.6 67.0C1125.2 63.2 1129.4 59.8 1132.4 55.5C1135.3 51.2 1137.3 46.2 1139.2 41.3C1141.2 36.4 1143.1 31.4 1144.0 26.2C1144.9 21.1 1144.6 13.1 1144.7 10.5"/>
<path d="M861.3 188.9C860.2 190.8 856.5 196.2 854.9 200.2C853.4 204.2 851.5 208.7 852.0 212.8C852.4 216.8 855.1 221.0 857.6 224.4C860.1 227.8 863.3 231.6 867.0 233.3C870.7 235.1 875.7 235.4 879.8 234.9C884.0 234.4 889.9 231.1 891.9 230.3"/>
<path d="M988.6 163.5C989.9 165.5 995.2 171.1 996.3 175.4C997.5 179.8 994.5 185.3 995.6 189.7C996.7 194.1 1001.8 197.4 1003.0 201.8C1004.2 206.2 1002.6 211.3 1002.7 216.1C1002.8 220.8 1003.4 225.5 1003.8 230.3C1004.2 235.0 1005.1 242.0 1005.3 244.4"/>
<path d="M1112.8 123.5C1114.1 122.6 1118.6 120.3 1120.6 117.9C1122.7 115.5 1122.7 111.4 1124.9 109.2C1127.0 107.0 1131.0 106.7 1133.5 104.8C1136.0 102.9 1137.6 99.7 1140.1 97.6C1142.5 95.6 1146.3 95.0 1148.4 92.6C1150.4 90.3 1151.1 86.7 1152.1 83.7C1153.2 80.7 1154.8 77.5 1154.8 74.4C1154.9 71.3 1152.8 66.6 1152.4 65.0"/>
<path d="M1049.1 154.4C1047.5 154.6 1042.6 155.1 1039.3 155.6C1036.1 156.1 1032.7 156.3 1029.6 157.4C1026.6 158.5 1024.0 160.9 1021.1 162.3C1018.1 163.8 1014.9 164.7 1012.0 166.2C1009.0 167.7 1004.8 170.3 1003.4 171.1"/>
<path d="M1001.9 201.9C1000.7 199.6 998.2 191.6 994.9 187.9C991.5 184.2 985.0 183.2 981.6 179.5C978.3 175.8 976.0 170.4 974.7 165.4C973.4 160.5 973.7 155.0 973.8 149.8C974.0 144.6 975.4 136.8 975.7 134.2"/>
<path d="M764.0 131.1C765.5 132.9 769.3 138.9 772.8 141.9C776.3 144.8 781.9 145.5 784.9 148.8C787.8 152.0 788.7 157.2 790.5 161.5C792.4 165.7 794.8 169.8 796.2 174.2C797.5 178.5 797.1 183.6 798.9 187.8C800.8 191.9 804.9 195.0 807.1 199.0C809.3 203.1 810.8 207.5 812.1 212.0C813.4 216.4 814.3 223.3 814.8 225.6"/>
<path d="M565.4 127.8C567.1 129.3 571.7 134.8 575.6 136.5C579.5 138.1 584.7 138.7 588.9 137.9C593.1 137.1 596.6 133.3 600.8 131.7C604.9 130.2 611.6 129.2 613.8 128.7"/>
<path d="M872.8 229.3C871.9 231.2 869.3 236.8 867.6 240.6C865.9 244.3 863.2 247.9 862.6 251.9C861.9 255.8 864.4 260.3 863.7 264.2C863.1 268.1 861.0 272.3 858.6 275.5C856.2 278.8 852.3 280.9 849.3 283.7C846.4 286.5 842.1 291.1 840.7 292.6"/>
<path d="M1026.9 285.8C1026.6 283.8 1026.4 277.4 1024.9 273.8C1023.3 270.3 1020.5 266.7 1017.4 264.3C1014.4 261.8 1009.5 261.7 1006.4 259.3C1003.3 256.9 1001.1 253.1 998.9 249.8C996.6 246.5 993.7 241.1 992.6 239.4"/>
<path d="M725.2 264.2C724.9 266.2 724.7 272.5 723.0 276.0C721.3 279.5 716.7 281.6 715.2 285.1C713.6 288.6 713.1 293.2 713.8 297.0C714.4 300.8 717.5 304.1 719.1 307.7C720.7 311.4 722.8 317.0 723.5 318.9"/>
<path d="M835.4 244.1C837.8 243.6 845.1 240.7 849.8 241.1C854.6 241.4 859.2 244.3 863.6 246.4C868.1 248.5 872.6 250.7 876.5 253.6C880.4 256.6 883.4 260.6 886.9 264.0C890.4 267.5 894.7 270.4 897.4 274.4C900.2 278.4 902.5 285.6 903.5 287.9"/>
<path d="M746.3 297.7C745.6 295.9 744.6 289.9 742.5 286.9C740.4 283.8 736.2 282.3 733.6 279.5C731.1 276.6 729.3 273.1 727.3 269.8C725.4 266.5 722.7 263.3 722.0 259.7C721.3 256.1 723.0 250.1 723.2 248.2"/>
<path d="M1093.9 306.4C1096.0 306.1 1102.6 306.2 1106.5 305.0C1110.5 303.8 1113.7 299.6 1117.7 298.9C1121.7 298.3 1126.3 299.6 1130.3 300.9C1134.2 302.3 1137.8 304.8 1141.5 306.8C1145.3 308.8 1148.7 312.1 1152.7 312.9C1156.6 313.8 1161.3 311.3 1165.3 311.9C1169.4 312.5 1175.2 315.9 1177.1 316.6"/>
<path d="M573.7 241.8C574.2 243.7 576.5 249.3 576.7 253.2C576.9 257.0 575.5 260.9 574.8 264.7C574.1 268.6 574.0 272.7 572.3 276.2C570.6 279.6 567.5 282.3 564.9 285.2C562.3 288.1 558.7 290.3 556.7 293.6C554.7 296.8 554.8 301.3 553.0 304.7C551.1 308.1 548.6 311.6 545.6 313.8C542.5 315.9 536.4 317.1 534.6 317.8"/>
<path d="M719.9 63.1C721.1 64.1 724.2 68.1 727.0 69.2C729.7 70.3 733.5 68.8 736.4 69.6C739.3 70.5 741.7 72.9 744.5 74.3C747.3 75.7 750.4 76.6 753.2 78.1C755.9 79.5 758.4 81.6 761.3 82.8C764.2 84.0 767.4 84.3 770.4 85.2C773.4 86.1 776.3 87.5 779.3 88.1C782.4 88.7 787.1 88.8 788.7 88.9"/>
<path d="M715.4 85.8C713.9 85.2 709.1 84.1 706.4 82.5C703.7 81.0 701.2 78.7 699.0 76.4C696.8 74.2 695.4 71.0 693.0 68.9C690.6 66.9 687.7 65.1 684.8 64.0C681.8 63.0 678.3 63.6 675.3 62.6C672.3 61.6 668.4 58.6 667.0 57.8"/>
<path d="M856.2 265.8C856.5 263.9 858.2 258.1 857.7 254.4C857.2 250.7 854.9 247.3 853.4 243.8C852.0 240.2 849.6 236.9 849.0 233.2C848.3 229.6 850.2 225.3 849.3 221.8C848.3 218.3 844.9 215.5 843.1 212.1C841.3 208.8 841.0 204.3 838.6 201.6C836.2 198.9 830.3 196.8 828.7 195.8"/>
<path d="M990.0 326.1C991.8 324.4 996.7 318.1 1000.9 315.9C1005.2 313.6 1010.9 312.2 1015.6 312.8C1020.3 313.3 1024.9 316.5 1029.2 319.1C1033.5 321.6 1037.3 324.9 1041.3 327.9C1045.3 330.9 1049.7 333.5 1053.1 337.1C1056.5 340.7 1060.3 347.3 1061.7 349.3"/>
<path d="M1015.7 172.1C1016.9 174.4 1021.0 180.9 1023.1 185.6C1025.1 190.3 1026.9 195.3 1027.8 200.3C1028.7 205.3 1027.7 210.7 1028.6 215.7C1029.5 220.7 1031.3 225.6 1033.2 230.4C1035.1 235.1 1037.8 239.6 1040.0 244.2C1042.2 248.9 1043.5 254.0 1046.3 258.3C1049.0 262.5 1054.9 267.8 1056.6 269.7"/>
<path d="M1063.3 185.7C1063.3 187.6 1064.4 193.4 1063.4 196.8C1062.4 200.2 1059.8 203.5 1057.4 206.2C1054.9 208.9 1050.4 210.0 1048.5 212.9C1046.5 215.8 1046.2 221.9 1045.7 223.7"/>
<path d="M833.3 275.5C834.4 276.6 837.6 280.5 840.3 282.3C843.0 284.0 846.6 284.3 849.3 286.0C852.1 287.7 854.5 290.0 856.8 292.3C859.1 294.5 860.8 297.6 863.4 299.5C866.0 301.4 869.1 303.0 872.2 303.7C875.3 304.4 880.3 303.7 882.0 303.7"/>
<path d="M719.6 104.1C721.8 103.4 728.1 100.4 732.5 100.2C736.8 100.0 741.2 102.0 745.6 102.9C750.0 103.7 754.3 104.8 758.7 105.3C763.2 105.8 768.2 104.4 772.1 105.9C776.1 107.4 779.4 111.1 782.5 114.3C785.6 117.4 789.4 123.1 790.8 124.8"/>
<path d="M998.3 82.2C999.6 83.7 1004.2 87.8 1006.1 91.1C1007.9 94.5 1009.7 98.7 1009.5 102.4C1009.4 106.1 1007.4 110.2 1005.3 113.4C1003.2 116.6 1000.2 119.6 997.0 121.8C993.8 124.0 988.0 125.7 986.2 126.5"/>
<path d="M1007.4 72.8C1009.9 72.3 1017.4 70.7 1022.3 69.4C1027.2 68.1 1032.4 67.3 1036.9 65.0C1041.3 62.7 1045.1 59.1 1049.0 55.8C1052.9 52.5 1055.8 47.6 1060.1 45.3C1064.4 43.0 1072.4 42.4 1074.9 41.8"/>
<path d="M796.2 267.7C797.4 266.4 801.0 262.3 803.7 260.0C806.4 257.7 809.3 254.7 812.6 253.8C815.9 252.9 819.8 255.0 823.4 254.7C826.9 254.4 830.3 252.9 833.9 252.1C837.4 251.3 842.7 250.4 844.5 250.0"/>
<path d="M645.6 267.3C646.5 265.8 650.1 261.7 651.1 258.4C652.0 255.2 651.6 251.5 651.4 248.0C651.1 244.6 649.9 241.2 649.6 237.7C649.3 234.3 649.5 229.1 649.4 227.3"/>
<path d="M859.9 299.9C860.0 298.3 860.2 293.5 860.4 290.3C860.6 287.1 861.8 283.6 860.9 280.7C860.1 277.8 857.7 275.0 855.4 272.9C853.1 270.8 850.1 269.1 847.1 268.1C844.2 267.2 840.7 268.0 837.6 267.3C834.5 266.6 831.3 265.6 828.6 264.0C825.9 262.4 822.7 258.6 821.5 257.6"/>
<path d="M810.0 67.2C810.3 69.3 810.5 75.7 811.5 79.8C812.5 83.8 814.1 87.9 816.2 91.5C818.3 95.2 820.6 99.3 823.8 101.7C827.1 104.0 831.7 105.0 835.8 105.8C839.9 106.6 844.2 106.4 848.5 106.6C852.7 106.7 857.0 106.1 861.1 106.7C865.3 107.4 871.2 110.0 873.2 110.7"/>
<path d="M764.3 244.6C764.0 242.3 762.3 235.5 762.7 231.0C763.0 226.5 766.4 222.3 766.4 217.9C766.5 213.5 764.3 209.0 763.0 204.6C761.7 200.2 759.3 193.8 758.6 191.7"/>
<path d="M1050.6 251.3C1048.9 250.7 1043.9 247.7 1040.5 247.7C1037.2 247.7 1033.8 251.3 1030.5 251.3C1027.1 251.3 1023.4 249.5 1020.5 247.7C1017.5 245.8 1015.7 242.1 1012.8 240.3C1009.8 238.4 1006.0 238.0 1002.8 236.5C999.6 235.0 996.8 232.5 993.5 231.3C990.2 230.0 984.9 229.3 983.1 228.9"/>
<path d="M773.6 204.4C773.8 201.8 776.2 193.7 775.3 188.8C774.4 183.8 771.4 178.7 768.2 174.8C764.9 170.8 760.2 168.0 755.8 165.1C751.5 162.3 746.9 158.8 742.0 157.7C737.1 156.6 731.5 157.6 726.4 158.5C721.3 159.5 714.0 162.7 711.5 163.5"/>
<path d="M715.5 185.3C715.0 187.2 713.7 193.2 712.2 196.9C710.8 200.7 707.7 204.0 707.0 207.9C706.3 211.7 708.0 216.0 707.9 220.0C707.8 224.0 706.1 228.1 706.5 232.0C707.0 235.9 708.5 240.1 710.5 243.5C712.6 246.8 717.5 250.8 718.9 252.2"/>
<path d="M580.7 183.4C581.7 184.7 584.7 188.6 586.9 191.0C589.0 193.4 591.9 195.2 593.7 197.9C595.4 200.5 595.9 204.0 597.4 206.8C599.0 209.6 602.1 213.4 603.1 214.7"/>
<path d="M1027.6 310.0C1028.8 308.1 1032.7 302.5 1034.7 298.5C1036.8 294.5 1038.7 290.4 1040.0 286.1C1041.2 281.8 1041.7 277.2 1042.1 272.7C1042.6 268.2 1043.9 263.2 1042.6 259.2C1041.3 255.1 1035.9 250.1 1034.5 248.3"/>
<path d="M1027.3 178.1C1025.6 178.1 1020.4 177.6 1017.0 178.0C1013.6 178.4 1010.2 179.2 1007.0 180.3C1003.8 181.5 1000.9 183.6 997.7 184.8C994.5 185.9 989.4 186.8 987.7 187.2"/>
<path d="M977.9 122.3C978.9 120.9 982.9 116.8 984.3 113.5C985.6 110.2 984.7 106.0 985.9 102.7C987.1 99.3 988.9 95.6 991.4 93.2C993.9 90.7 997.8 89.7 1001.1 88.1C1004.4 86.5 1009.4 84.4 1011.1 83.7"/>
<path d="M1019.2 143.6C1018.8 145.2 1018.3 150.6 1016.5 153.1C1014.7 155.6 1011.2 157.2 1008.3 158.6C1005.4 160.0 1002.0 161.5 998.9 161.5C995.7 161.5 991.0 159.0 989.5 158.5"/>
<path d="M1055.3 61.6C1056.5 63.0 1060.1 67.1 1062.7 69.6C1065.3 72.1 1068.0 74.7 1071.0 76.7C1073.9 78.7 1077.2 81.0 1080.6 81.7C1084.0 82.4 1089.7 80.8 1091.5 80.7"/>
<path d="M1106.6 103.0C1105.9 101.7 1103.5 97.7 1102.2 94.9C1100.9 92.1 1099.7 89.2 1098.6 86.3C1097.5 83.5 1096.1 79.0 1095.6 77.6"/>
<path d="M970.7 215.3C972.5 216.1 977.9 218.0 981.3 219.8C984.8 221.5 987.7 224.7 991.3 225.7C994.8 226.7 999.2 224.9 1002.8 225.8C1006.5 226.6 1011.4 230.1 1013.1 230.9"/>
<path d="M1008.5 212.2C1008.0 213.9 1007.0 219.2 1005.9 222.7C1004.8 226.1 1003.9 229.8 1001.9 232.7C999.9 235.6 996.6 237.5 994.0 240.1C991.5 242.6 987.9 246.7 986.7 248.0"/>
<path d="M1027.8 192.4C1027.5 191.0 1027.1 186.7 1026.4 184.0C1025.7 181.2 1024.4 178.6 1023.6 175.9C1022.9 173.2 1021.9 170.3 1022.0 167.5C1022.0 164.7 1023.5 160.6 1023.9 159.2"/>
<path d="M962.7 91.5C961.6 91.9 958.2 93.1 956.0 94.0C953.9 95.0 951.7 96.1 949.7 97.4C947.8 98.8 945.6 100.2 944.3 102.1C943.0 104.1 942.3 106.6 942.0 108.9C941.6 111.2 942.8 113.9 942.2 116.1C941.5 118.3 938.9 121.1 938.2 122.1"/>
<path d="M969.0 192.6C967.7 193.4 963.7 195.6 961.4 197.5C959.1 199.4 957.6 202.5 955.0 203.9C952.5 205.3 949.1 206.1 946.3 206.0C943.4 205.8 939.2 203.4 937.8 202.9"/>
<path d="M1054.9 127.4C1056.3 128.1 1061.1 129.5 1063.4 131.4C1065.8 133.4 1067.0 136.6 1069.0 139.0C1071.0 141.4 1073.2 143.7 1075.5 145.8C1077.8 148.0 1080.3 149.9 1082.6 152.0C1084.9 154.2 1088.0 157.7 1089.1 158.9"/>
<path d="M1112.1 148.0C1113.2 149.0 1116.4 152.4 1118.9 154.0C1121.4 155.7 1124.5 156.4 1127.2 157.9C1129.8 159.4 1132.1 161.4 1134.7 163.0C1137.3 164.6 1139.9 166.2 1142.6 167.4C1145.4 168.6 1148.3 169.8 1151.2 170.4C1154.2 171.0 1158.8 171.0 1160.3 171.1"/>
<path d="M1092.6 209.7C1093.0 208.4 1093.3 204.0 1094.5 201.7C1095.8 199.4 1097.9 196.9 1100.2 195.7C1102.5 194.5 1106.9 194.6 1108.3 194.4"/>
<path d="M1039.9 75.2C1040.0 73.6 1039.3 68.5 1040.2 65.5C1041.1 62.5 1043.0 59.1 1045.4 57.3C1047.8 55.4 1051.5 54.8 1054.7 54.3C1057.8 53.9 1062.8 54.4 1064.4 54.5"/>
<path d="M1106.4 120.8C1106.9 122.3 1108.4 127.1 1109.6 130.1C1110.8 133.1 1111.7 136.6 1113.8 139.0C1115.8 141.4 1118.9 143.6 1121.9 144.5C1124.9 145.5 1128.4 144.5 1131.7 144.6C1135.0 144.6 1138.4 145.6 1141.5 144.9C1144.6 144.1 1148.7 141.0 1150.2 140.3"/>
<path d="M1108.2 156.6C1108.6 157.7 1109.4 161.2 1110.4 163.3C1111.4 165.4 1112.4 167.8 1114.1 169.2C1115.9 170.6 1118.9 170.5 1120.6 171.9C1122.4 173.3 1123.8 175.5 1124.7 177.6C1125.6 179.7 1125.4 182.2 1126.0 184.5C1126.6 186.7 1127.8 190.0 1128.2 191.1"/>
<path d="M1019.9 158.3C1018.7 159.0 1014.8 161.0 1012.6 162.7C1010.4 164.5 1008.0 166.4 1006.6 168.8C1005.2 171.1 1004.6 175.6 1004.2 177.0"/>
<path d="M1090.5 191.3C1091.6 190.6 1095.5 188.7 1097.0 186.7C1098.5 184.7 1099.1 181.7 1099.7 179.1C1100.2 176.6 1099.5 173.6 1100.3 171.2C1101.1 168.7 1104.0 165.6 1104.7 164.5"/>
<path d="M1111.1 59.8C1110.3 61.2 1108.4 66.1 1106.1 68.1C1103.8 70.0 1100.2 70.7 1097.1 71.5C1094.0 72.3 1090.6 72.0 1087.5 72.9C1084.4 73.8 1080.2 76.2 1078.7 76.9"/>
<path d="M1097.4 223.3C1096.1 221.9 1091.8 218.0 1089.7 215.0C1087.6 211.9 1085.2 208.4 1084.6 204.8C1084.0 201.3 1085.8 197.4 1086.2 193.6C1086.6 189.8 1087.8 185.8 1087.0 182.3C1086.2 178.8 1082.3 174.1 1081.3 172.4"/>
<path d="M997.5 110.1C997.2 108.8 996.9 104.5 996.0 101.9C995.1 99.3 993.8 96.7 992.2 94.5C990.6 92.3 987.7 90.9 986.2 88.6C984.8 86.3 983.8 82.1 983.3 80.8"/>
<path d="M1048.1 77.0C1049.0 75.3 1052.4 70.2 1053.5 66.4C1054.5 62.7 1055.1 58.3 1054.4 54.6C1053.8 50.8 1050.7 47.5 1049.5 43.8C1048.3 40.0 1047.5 34.1 1047.2 32.1"/>
<path d="M1037.7 70.2C1039.2 70.9 1043.5 73.3 1046.5 74.2C1049.6 75.0 1053.0 75.5 1056.1 75.4C1059.3 75.2 1064.0 73.5 1065.5 73.2"/>
<path d="M1094.9 72.1C1096.4 73.4 1101.3 77.1 1103.7 80.1C1106.2 83.2 1106.7 88.1 1109.5 90.6C1112.3 93.2 1117.2 93.1 1120.4 95.4C1123.6 97.6 1125.4 102.0 1128.6 104.1C1131.9 106.2 1138.0 107.3 1139.9 107.9"/>
<path d="M1110.8 164.6C1111.2 163.5 1112.8 160.1 1112.7 157.8C1112.7 155.6 1110.8 153.5 1110.4 151.2C1110.1 148.9 1110.0 146.3 1110.8 144.2C1111.5 142.1 1113.8 140.6 1114.9 138.5C1116.0 136.5 1116.6 134.2 1117.4 132.0C1118.3 129.8 1119.4 126.5 1119.8 125.4"/>
<path d="M965.4 107.4C964.7 105.9 962.9 101.3 961.4 98.3C959.9 95.3 957.8 92.6 956.6 89.5C955.4 86.5 954.8 83.1 954.0 79.9C953.3 76.7 952.4 71.8 952.1 70.1"/>
<path d="M1003.0 180.9C1002.0 179.9 998.9 177.2 997.1 175.1C995.3 173.0 994.0 170.4 992.0 168.5C990.0 166.7 987.6 165.0 985.1 164.0C982.6 163.0 978.3 162.8 976.9 162.6"/>
<path d="M1123.1 66.1C1124.6 67.2 1128.7 71.8 1132.2 72.9C1135.6 74.0 1139.7 72.7 1143.5 72.5C1147.3 72.4 1151.1 72.4 1154.9 72.1C1158.6 71.8 1162.4 71.3 1166.1 70.7C1169.9 70.0 1173.8 69.7 1177.3 68.3C1180.7 66.9 1185.4 63.4 1187.0 62.4"/>
<path d="M1094.2 69.5C1092.9 68.5 1089.3 64.9 1086.5 63.4C1083.7 61.8 1080.3 60.5 1077.1 60.3C1074.0 60.1 1070.5 61.1 1067.4 62.1C1064.4 63.1 1060.0 65.7 1058.6 66.4"/>
<path d="M967.1 111.4C965.3 111.0 960.0 110.0 956.5 109.2C953.0 108.5 949.5 107.4 945.9 106.9C942.4 106.5 938.6 106.0 935.1 106.4C931.6 106.9 928.2 108.6 924.8 109.7C921.3 110.8 916.2 112.5 914.5 113.0"/>
<path d="M1070.7 160.1C1069.8 160.9 1066.8 163.1 1065.4 165.1C1064.0 167.0 1064.0 170.1 1062.4 171.7C1060.8 173.4 1057.5 173.5 1055.9 175.2C1054.3 176.8 1053.8 179.6 1052.8 181.8C1051.8 184.0 1051.2 186.5 1049.8 188.4C1048.4 190.4 1045.5 192.7 1044.6 193.6"/>
<path d="M1125.7 82.0C1126.8 80.9 1130.4 77.6 1132.5 75.2C1134.6 72.8 1136.4 70.1 1138.4 67.6C1140.4 65.1 1143.3 63.1 1144.5 60.2C1145.7 57.4 1145.2 53.9 1145.7 50.7C1146.2 47.5 1147.0 44.4 1147.6 41.3C1148.2 38.1 1148.9 33.4 1149.2 31.8"/>
<path d="M1117.2 225.1C1117.6 226.4 1118.8 230.5 1119.9 233.1C1121.0 235.7 1121.7 238.8 1123.5 240.8C1125.3 242.8 1128.1 244.3 1130.7 245.2C1133.3 246.2 1137.7 246.4 1139.1 246.6"/>
<path d="M1011.9 220.7C1010.8 221.2 1007.0 222.0 1005.2 223.5C1003.5 225.0 1002.5 227.5 1001.5 229.7C1000.4 231.8 1000.2 234.3 999.1 236.5C998.0 238.6 995.7 241.4 995.0 242.4"/>
<path d="M1105.2 159.2C1103.7 159.5 1099.1 160.1 1096.1 161.0C1093.1 161.8 1090.4 163.7 1087.4 164.2C1084.4 164.7 1081.1 163.4 1078.1 163.9C1075.1 164.4 1070.8 166.7 1069.4 167.2"/>
<path d="M1018.4 88.8C1017.0 89.5 1013.0 92.3 1010.1 93.2C1007.2 94.2 1003.9 94.0 1000.8 94.5C997.7 94.9 994.6 95.5 991.5 96.1C988.4 96.6 983.8 97.5 982.3 97.8"/>
<path d="M1065.3 88.4C1065.0 89.7 1064.4 93.7 1063.4 96.2C1062.4 98.7 1060.6 100.8 1059.5 103.2C1058.4 105.7 1057.4 108.3 1057.0 110.9C1056.6 113.5 1056.2 116.5 1057.1 118.9C1057.9 121.3 1060.0 123.5 1062.1 125.1C1064.1 126.8 1068.1 128.0 1069.3 128.6"/>
<path d="M1004.1 125.0C1003.8 126.3 1003.6 130.8 1002.3 133.1C1001.0 135.4 998.0 136.7 996.2 138.8C994.3 140.9 993.3 143.7 991.3 145.6C989.3 147.4 985.4 149.3 984.3 150.1"/>
<path d="M1081.5 213.9C1082.5 212.2 1084.6 206.2 1087.2 203.3C1089.8 200.5 1094.0 199.2 1097.1 196.7C1100.3 194.2 1104.4 189.9 1105.9 188.5"/>
<path d="M1003.1 209.0C1001.9 208.1 998.8 205.0 996.3 203.8C993.8 202.6 990.8 202.5 988.0 201.9C985.3 201.2 981.2 200.2 979.8 199.8"/>
<path d="M981.4 93.1C980.0 93.4 975.6 94.9 972.6 95.2C969.6 95.4 966.4 94.3 963.5 94.7C960.5 95.0 957.7 96.8 954.7 97.2C951.7 97.6 948.6 97.3 945.6 96.9C942.6 96.4 939.7 94.5 936.8 94.4C933.8 94.4 929.4 96.1 927.9 96.5"/>
<path d="M994.4 105.5C992.9 105.8 988.3 106.2 985.6 107.3C982.8 108.4 980.3 110.3 978.0 112.3C975.8 114.3 973.9 116.7 972.2 119.2C970.6 121.7 968.9 124.4 968.1 127.2C967.3 130.1 966.7 133.4 967.4 136.2C968.1 139.0 971.4 142.6 972.2 143.9"/>
<path d="M964.1 166.1C965.8 165.3 970.7 162.5 974.1 161.4C977.6 160.3 981.5 158.9 985.0 159.2C988.5 159.6 993.5 162.7 995.2 163.4"/>
<path d="M996.3 176.2C997.0 174.4 998.9 168.8 1000.6 165.3C1002.4 161.8 1005.8 158.9 1006.8 155.3C1007.8 151.6 1006.7 145.5 1006.6 143.5"/>
<path d="M1031.9 124.9C1033.0 123.8 1036.3 120.3 1038.9 118.5C1041.4 116.8 1044.9 116.3 1047.3 114.4C1049.8 112.5 1052.6 108.5 1053.6 107.4"/>
</g>
<g fill="none" stroke="#dccbe8" stroke-width="0.8" opacity=".95">
<path d="M569 70C600 90 640 80 676 100S730 130 760 125 800 150 830 140 900 150 940 120 1000 100 1060 110 1128 100"/>
<path d="M700 57C710 100 690 140 700 180S720 240 700 280"/>
<path d="M780 57C790 100 806 120 820 150S850 200 895 180 960 200 1000 190 1060 180 1090 176"/>
<path d="M600 178C620 150 660 160 690 200S750 220 790 260 850 300 866 313"/>
<path d="M880 57C890 90 930 110 950 150S970 200 960 228"/>
<path d="M1000 57C1010 90 1040 120 1060 150S1070 170 1075 187"/>
<path d="M1128 120C1100 140 1080 160 1075 187"/>
<path d="M1128 200C1110 230 1095 260 1090 300"/>
<path d="M740 57C745 90 760 120 770 160S760 220 740 260 720 290 715 310"/>
<path d="M830 322C840 280 860 240 897 178"/>
<path d="M1010 57C1040 80 1080 90 1128 70"/>
<path d="M655 200C700 190 760 200 800 180"/>
<path d="M940 57C960 80 1000 90 1040 80S1100 60 1128 64"/>
<path d="M1030 130C1050 150 1090 150 1128 170"/>
<path d="M990 230C1000 200 1030 170 1075 187"/>
</g>
<g fill="none" stroke="#9dd9c6" stroke-width="1.1" opacity=".95">
<path d="M577.0 57.0C576.3 61.7 574.3 74.8 573.0 85.0C571.7 95.2 571.5 107.5 569.0 118.0C566.5 128.5 561.5 137.7 558.0 148.0C554.5 158.3 549.7 174.7 548.0 180.0"/>
<path d="M668.0 57.0C668.7 59.2 669.2 64.2 672.0 70.0C674.8 75.8 682.2 83.8 685.0 91.5C687.8 99.2 691.2 109.1 689.0 116.0C686.8 122.9 677.7 127.3 672.0 133.0C666.3 138.7 657.8 147.2 655.0 150.0"/>
<path d="M805.0 50.0C805.3 54.2 805.6 67.4 807.0 75.0C808.4 82.6 810.3 89.4 813.5 95.6C816.7 101.8 821.9 107.2 826.0 112.0C830.1 116.8 833.2 120.5 838.0 124.7C842.8 128.9 848.0 132.2 855.0 137.0C862.0 141.8 873.8 147.4 880.0 153.7C886.2 159.9 891.0 168.3 892.0 174.5C893.0 180.7 886.8 184.2 886.0 191.0C885.2 197.8 886.5 206.8 887.0 215.0C887.5 223.2 886.8 232.2 889.0 240.0C891.2 247.8 898.2 258.3 900.0 262.0"/>
<path d="M826.0 112.0C825.0 115.5 821.9 125.3 819.8 133.0C817.7 140.7 816.6 149.0 813.5 158.0C810.4 167.0 806.6 177.3 801.0 187.0C795.4 196.7 787.7 209.1 780.0 216.0C772.3 222.9 764.5 225.3 755.0 228.4C745.5 231.5 734.7 231.8 723.0 234.6C711.3 237.4 696.3 240.9 685.0 245.0C673.7 249.1 660.0 256.7 655.0 259.0"/>
<path d="M892.0 174.5C896.2 174.5 907.3 173.8 917.0 174.5C926.7 175.2 938.9 178.6 950.0 178.6C961.1 178.6 973.2 176.6 983.7 174.5C994.2 172.4 1004.4 166.8 1012.7 166.0C1021.0 165.2 1025.9 168.6 1033.4 170.0C1041.0 171.4 1051.1 172.3 1058.0 174.5C1064.9 176.7 1072.2 181.6 1075.0 183.0"/>
<path d="M868.0 50.0C872.0 52.8 882.4 62.8 892.0 66.6C901.6 70.4 914.5 70.1 925.6 72.8C936.7 75.5 947.7 78.5 958.8 83.0C969.9 87.5 982.3 92.8 992.0 99.8C1001.7 106.8 1009.9 117.1 1016.8 124.7C1023.7 132.3 1027.9 138.5 1033.4 145.4C1038.9 152.3 1045.9 160.5 1050.0 166.0C1054.1 171.5 1056.7 176.5 1058.0 178.6"/>
<path d="M1076.0 50.0C1075.1 56.9 1072.0 77.7 1070.8 91.5C1069.6 105.3 1068.7 119.2 1068.7 133.0C1068.7 146.8 1070.5 167.6 1070.8 174.5"/>
<path d="M1135.0 98.0C1129.1 105.9 1109.1 132.7 1099.8 145.4C1090.5 158.2 1082.5 169.7 1079.0 174.5"/>
<path d="M1066.6 191.0C1061.1 195.2 1043.8 209.8 1033.4 216.0C1023.0 222.2 1014.1 225.6 1004.4 228.4C994.7 231.2 984.4 230.5 975.4 232.6C966.4 234.7 957.2 236.7 950.5 240.9C943.8 245.1 937.6 255.2 935.0 258.0"/>
<path d="M909.0 260.7C906.2 263.5 897.9 271.8 892.4 277.3C886.9 282.9 881.4 288.5 875.8 294.0C870.2 299.5 864.5 306.4 859.0 310.5C853.5 314.6 849.5 317.1 842.6 318.8C835.7 320.6 827.4 321.0 817.7 321.0C808.0 321.0 795.6 319.9 784.5 318.8C773.4 317.8 761.0 316.8 751.3 314.7C741.6 312.6 734.0 309.8 726.4 306.4C718.8 302.9 710.5 298.1 705.6 294.0C700.8 289.9 700.7 285.7 697.3 281.5C693.9 277.3 691.2 272.2 685.0 269.0C678.8 265.8 664.2 263.2 660.0 262.0"/>
<path d="M1135.0 150.0C1130.8 152.5 1117.5 160.7 1110.0 165.0C1102.5 169.3 1093.3 174.2 1090.0 176.0"/>
<path d="M690.0 262.0C690.3 265.8 692.3 278.7 692.0 285.0C691.7 291.3 688.7 297.5 688.0 300.0"/>
</g>
<g fill="none" stroke="#9a9aa6" stroke-width="0.6"><path d="M670 285C700 300 720 325 750 338S800 340 830 338 860 320 880 295 920 270 945 270 975 250 985 240 1040 220 1065 195"/><path d="M956 64C990 80 1020 92 1040 115S1060 150 1066 180"/><path d="M1076 57C1070 85 1058 105 1045 125"/></g>
</g>
<g fill="#f2f1ed">
<ellipse cx="1012.7" cy="333.4" rx="5.5" ry="9" transform="rotate(-12 1012.7 333.4)"/><ellipse cx="999" cy="371" rx="2.2" ry="3.5"/><ellipse cx="995" cy="396" rx="3" ry="8" transform="rotate(15 995 396)"/><ellipse cx="979" cy="422" rx="5" ry="3.5"/>
<path d="M401.0 178.0C401.0 175.5 402.0 171.5 404.0 169.0C406.0 166.5 409.7 164.7 413.0 163.0C416.3 161.3 420.5 159.8 424.0 159.0C427.5 158.2 431.2 157.8 434.0 158.5C436.8 159.2 439.7 160.9 441.0 163.0C442.3 165.1 442.5 168.2 442.0 171.0C441.5 173.8 444.3 177.8 438.0 180.0C431.7 182.2 410.2 184.3 404.0 184.0C397.8 183.7 401.0 180.5 401.0 178.0Z"/>
<ellipse cx="362" cy="178" rx="14" ry="3"/>
</g>
<ellipse cx="826" cy="113" rx="3.5" ry="2.5" fill="#abc8f0"/>
<path d="M734 318l5 0 2 6-3 4-3-3z" fill="#abc8f0"/>
<g font-family="Liberation Sans, sans-serif" fill="#7d7d7d" text-anchor="middle">
<text x="560.0" y="103.1" font-size="6.0" fill="#707070">Fukui</text>
<text x="552.0" y="130.4" font-size="4.0" fill="#707070">FUKUI</text>
<text x="609.0" y="118.8" font-size="5.0" fill="#707070">Ono</text>
<text x="808.0" y="81.9" font-size="5.5" fill="#707070">Matsumoto</text>
<text x="716.0" y="89.8" font-size="5.0" fill="#707070">Takayama</text>
<text x="822.0" y="114.6" font-size="4.5" fill="#707070">NAGANO</text>
<text x="897.0" y="177.3" font-size="6.5" fill="#707070">Kofu</text>
<text x="904.0" y="191.5" font-size="4.2" fill="#707070">YAMANASHI</text>
<text x="1047.0" y="142.3" font-size="6.5" fill="#707070">Saitama</text>
<text x="1015.0" y="167.9" font-size="5.5" fill="#707070">TOKYO</text>
<text x="1022.0" y="157.8" font-size="5.0" fill="#707070">Tokorozawa</text>
<text x="1014.0" y="131.8" font-size="5.0" fill="#707070">Kawagoe</text>
<text x="990.0" y="116.5" font-size="4.3" fill="#707070">SAITAMA-KEN</text>
<text x="1011.0" y="98.8" font-size="5.0" fill="#707070">Kumagaya</text>
<text x="956.0" y="67.8" font-size="5.0" fill="#707070">Takasaki</text>
<text x="993.0" y="63.6" font-size="4.5" fill="#707070">Isesaki</text>
<text x="1006.0" y="181.8" font-size="5.0" fill="#707070">Hachioji</text>
<text x="982.0" y="250.8" font-size="5.2" fill="#707070">Odawara</text>
<text x="961.0" y="265.8" font-size="5.2" fill="#707070">Mishima</text>
<text x="939.0" y="279.8" font-size="5.2" fill="#707070">Numazu</text>
<text x="903.0" y="248.8" font-size="5.0" fill="#707070">Fujinomiya</text>
<text x="834.0" y="269.5" font-size="4.3" fill="#707070">SHIZUOKA-KEN</text>
<text x="777.0" y="344.8" font-size="5.0" fill="#707070">Hamamatsu</text>
<text x="730.0" y="334.8" font-size="5.0" fill="#707070">Toyohashi</text>
<text x="950.0" y="340.7" font-size="4.8" fill="#707070">Shimoda</text>
<text x="1093.0" y="294.7" font-size="4.8" fill="#707070">Tateyama</text>
<text x="1084.0" y="230.7" font-size="4.8" fill="#707070">Kisarazu</text>
<text x="1119.0" y="210.7" font-size="4.8" fill="#707070">Ichihara</text>
<text x="1080.0" y="160.7" font-size="4.8" fill="#707070">Adachi-ku</text>
<text x="1117.0" y="134.7" font-size="4.8" fill="#707070">Kashiwa</text>
<text x="761.0" y="202.5" font-size="4.2" fill="#707070">Narakugawa</text>
<text x="824.0" y="161.5" font-size="4.2" fill="#707070">Komagane</text>
<text x="772.0" y="133.3" font-size="3.6" fill="#8a8a8a">Mt.Takatsuma</text>
<text x="689.0" y="156.3" font-size="3.6" fill="#8a8a8a">Mt.Komakasayama</text>
<text x="848.0" y="184.3" font-size="3.6" fill="#8a8a8a">Mt.Shiomi</text>
<text x="992.0" y="208.3" font-size="3.6" fill="#8a8a8a">Mt.Tanzawa</text>
<text x="984.0" y="170.3" font-size="3.6" fill="#8a8a8a">Mt.Yogusayama</text>
<text x="870.0" y="161.3" font-size="3.6" fill="#8a8a8a">Kaikoma Peak</text>
<text x="778.0" y="267.3" font-size="3.6" fill="#8a8a8a">Mt.Kurohoyama</text>
<text x="794.0" y="303.3" font-size="3.6" fill="#8a8a8a">Mt.Ryusoyama</text>
<text x="772.0" y="230.3" font-size="3.6" fill="#8a8a8a">Mt.Bampeizan</text>
<text x="836.0" y="230.3" font-size="3.6" fill="#8a8a8a">Mt.Tsurugi</text>
<text x="691.0" y="242.5" font-size="4.2" fill="#707070">Tajimi</text>
<text x="696.0" y="319.6" font-size="4.5" fill="#707070">Nishio</text>
<text x="672.0" y="244.5" font-size="4.2" fill="#707070">Kasugai</text>
<text x="905.0" y="211.3" font-size="3.6" fill="#8a8a8a">Mt.Teppoyama</text>
<text x="861.0" y="109.3" font-size="3.6" fill="#8a8a8a">Mt.Hachibuse</text>
<text x="921.0" y="64.3" font-size="3.6" fill="#8a8a8a">Mt.Asama</text>
<text x="610.0" y="98.3" font-size="3.6" fill="#8a8a8a">Mt.Arashima</text>
<text x="608.0" y="161.3" font-size="3.6" fill="#8a8a8a">Mt.Sanno</text>
<text x="614.0" y="175.3" font-size="3.6" fill="#8a8a8a">Mt.Jogatake</text>
<text x="553.0" y="175.4" font-size="4.0" fill="#707070">Tsuruga</text>
<text x="553.0" y="75.4" font-size="4.0" fill="#707070">Echizen</text>
<text x="985.0" y="261.2" font-size="3.4" fill="#6aa0d8">Sagami-nada Sea</text>
<text x="1065.0" y="253.2" font-size="3.4" fill="#6aa0d8">Uraga-suido</text>
<text x="751.0" y="354.2" font-size="3.4" fill="#6aa0d8">Enshu-nada Sea</text>
<text x="940.0" y="352.2" font-size="3.4" fill="#6aa0d8">Sagami-nada Sea</text>
<text x="1070.0" y="301.2" font-size="3.4" fill="#6aa0d8">Hirasuna Inlet</text>
</g>
<path d="M723.6 62.5h5.600v3.300l-2.800 2.900l-2.800-2.900z" fill="#4c82c9" opacity=".9"/><rect x="724.7" y="63.8" width="3.400" height="1.700" rx=".5" fill="#e4edf9"/>
<path d="M672.6 112.1h5.600v3.300l-2.800 2.900l-2.800-2.900z" fill="#4c82c9" opacity=".9"/><rect x="673.7" y="113.4" width="3.400" height="1.700" rx=".5" fill="#e4edf9"/>
<path d="M716.5 111.4h5.600v3.300l-2.800 2.900l-2.800-2.900z" fill="#4c82c9" opacity=".9"/><rect x="717.6" y="112.7" width="3.400" height="1.700" rx=".5" fill="#e4edf9"/>
<path d="M749.2 115.6h5.600v3.300l-2.800 2.900l-2.800-2.900z" fill="#4c82c9" opacity=".9"/><rect x="750.3" y="116.9" width="3.400" height="1.700" rx=".5" fill="#e4edf9"/>
<path d="M848.9 83.6h5.600v3.300l-2.800 2.900l-2.800-2.900z" fill="#4c82c9" opacity=".9"/><rect x="850.0" y="84.9" width="3.400" height="1.700" rx=".5" fill="#e4edf9"/>
<path d="M882.1 89.8h5.600v3.300l-2.800 2.900l-2.800-2.900z" fill="#4c82c9" opacity=".9"/><rect x="883.2" y="91.1" width="3.400" height="1.700" rx=".5" fill="#e4edf9"/>
<path d="M812.8 133.4h5.600v3.300l-2.800 2.900l-2.800-2.900z" fill="#4c82c9" opacity=".9"/><rect x="813.9" y="134.7" width="3.400" height="1.700" rx=".5" fill="#e4edf9"/>
<path d="M850.2 134.1h5.600v3.300l-2.800 2.900l-2.800-2.900z" fill="#4c82c9" opacity=".9"/><rect x="851.3" y="135.4" width="3.400" height="1.700" rx=".5" fill="#e4edf9"/>
<path d="M940.2 106.4h5.600v3.300l-2.800 2.900l-2.800-2.900z" fill="#4c82c9" opacity=".9"/><rect x="941.3" y="107.7" width="3.400" height="1.700" rx=".5" fill="#e4edf9"/>
<path d="M978.8 85.7h5.600v3.300l-2.800 2.900l-2.800-2.900z" fill="#4c82c9" opacity=".9"/><rect x="979.9" y="87.0" width="3.400" height="1.700" rx=".5" fill="#e4edf9"/>
<path d="M1097.9 83.1h5.600v3.300l-2.800 2.900l-2.800-2.900z" fill="#4c82c9" opacity=".9"/><rect x="1099.0" y="84.4" width="3.400" height="1.700" rx=".5" fill="#e4edf9"/>
<path d="M1056.2 109.1h5.600v3.300l-2.800 2.900l-2.800-2.900z" fill="#4c82c9" opacity=".9"/><rect x="1057.3" y="110.4" width="3.400" height="1.700" rx=".5" fill="#e4edf9"/>
<path d="M1088.7 110.1h5.600v3.300l-2.800 2.900l-2.800-2.900z" fill="#4c82c9" opacity=".9"/><rect x="1089.8" y="111.4" width="3.400" height="1.700" rx=".5" fill="#e4edf9"/>
<path d="M1036.9 124.7h5.600v3.300l-2.800 2.900l-2.800-2.900z" fill="#4c82c9" opacity=".9"/><rect x="1038.0" y="126.0" width="3.400" height="1.700" rx=".5" fill="#e4edf9"/>
<path d="M1079.6 124.7h5.600v3.300l-2.800 2.900l-2.800-2.900z" fill="#4c82c9" opacity=".9"/><rect x="1080.7" y="126.0" width="3.400" height="1.700" rx=".5" fill="#e4edf9"/>
<path d="M1069.2 141.7h5.600v3.300l-2.800 2.900l-2.800-2.900z" fill="#4c82c9" opacity=".9"/><rect x="1070.3" y="143.0" width="3.400" height="1.700" rx=".5" fill="#e4edf9"/>
<path d="M1121.2 150.8h5.600v3.300l-2.800 2.900l-2.800-2.900z" fill="#4c82c9" opacity=".9"/><rect x="1122.3" y="152.1" width="3.400" height="1.700" rx=".5" fill="#e4edf9"/>
<path d="M921.9 144.6h5.600v3.300l-2.800 2.900l-2.800-2.900z" fill="#4c82c9" opacity=".9"/><rect x="923.0" y="145.9" width="3.400" height="1.700" rx=".5" fill="#e4edf9"/>
<path d="M946.8 151.7h5.600v3.300l-2.800 2.900l-2.800-2.900z" fill="#4c82c9" opacity=".9"/><rect x="947.9" y="153.0" width="3.400" height="1.700" rx=".5" fill="#e4edf9"/>
<path d="M736.0 173.7h5.600v3.300l-2.800 2.900l-2.800-2.900z" fill="#4c82c9" opacity=".9"/><rect x="737.1" y="175.0" width="3.400" height="1.700" rx=".5" fill="#e4edf9"/>
<path d="M1073.0 167.1h5.600v3.300l-2.800 2.900l-2.800-2.900z" fill="#4c82c9" opacity=".9"/><rect x="1074.1" y="168.4" width="3.400" height="1.700" rx=".5" fill="#e4edf9"/>
<path d="M882.5 186.9h5.600v3.300l-2.800 2.900l-2.800-2.900z" fill="#4c82c9" opacity=".9"/><rect x="883.6" y="188.2" width="3.400" height="1.700" rx=".5" fill="#e4edf9"/>
<path d="M720.2 208.1h5.600v3.300l-2.800 2.900l-2.800-2.900z" fill="#4c82c9" opacity=".9"/><rect x="721.3" y="209.4" width="3.400" height="1.700" rx=".5" fill="#e4edf9"/>
<path d="M946.4 206.9h5.600v3.300l-2.800 2.900l-2.800-2.900z" fill="#4c82c9" opacity=".9"/><rect x="947.5" y="208.2" width="3.400" height="1.700" rx=".5" fill="#e4edf9"/>
<path d="M1092.9 210.1h5.600v3.300l-2.800 2.900l-2.800-2.900z" fill="#4c82c9" opacity=".9"/><rect x="1094.0" y="211.4" width="3.400" height="1.700" rx=".5" fill="#e4edf9"/>
<path d="M751.4 235.9h5.600v3.300l-2.800 2.900l-2.800-2.900z" fill="#4c82c9" opacity=".9"/><rect x="752.5" y="237.2" width="3.400" height="1.700" rx=".5" fill="#e4edf9"/>
<path d="M706.2 252.5h5.600v3.300l-2.800 2.900l-2.800-2.900z" fill="#4c82c9" opacity=".9"/><rect x="707.3" y="253.8" width="3.400" height="1.700" rx=".5" fill="#e4edf9"/>
<path d="M674.6 265.3h5.600v3.300l-2.800 2.900l-2.800-2.900z" fill="#4c82c9" opacity=".9"/><rect x="675.7" y="266.6" width="3.400" height="1.700" rx=".5" fill="#e4edf9"/>
<path d="M748.5 287.7h5.600v3.300l-2.800 2.900l-2.800-2.900z" fill="#4c82c9" opacity=".9"/><rect x="749.6" y="289.0" width="3.400" height="1.700" rx=".5" fill="#e4edf9"/>
<path d="M800.2 287.7h5.600v3.300l-2.800 2.900l-2.800-2.900z" fill="#4c82c9" opacity=".9"/><rect x="801.3" y="289.0" width="3.400" height="1.700" rx=".5" fill="#e4edf9"/>
<path d="M825.2 289.8h5.600v3.300l-2.800 2.900l-2.800-2.900z" fill="#4c82c9" opacity=".9"/><rect x="826.3" y="291.1" width="3.400" height="1.700" rx=".5" fill="#e4edf9"/>
<path d="M841.8 346.1h5.600v3.300l-2.800 2.900l-2.800-2.900z" fill="#4c82c9" opacity=".9"/><rect x="842.9" y="347.4" width="3.400" height="1.700" rx=".5" fill="#e4edf9"/>
<path d="M1109.5 268.1h5.600v3.300l-2.800 2.900l-2.800-2.900z" fill="#4c82c9" opacity=".9"/><rect x="1110.6" y="269.4" width="3.400" height="1.700" rx=".5" fill="#e4edf9"/>
<path d="M586.5 73.6h5.600v3.300l-2.800 2.900l-2.800-2.900z" fill="#4c82c9" opacity=".9"/><rect x="587.6" y="74.9" width="3.400" height="1.700" rx=".5" fill="#e4edf9"/>
<path d="M633.4 67.5h5.600v3.300l-2.800 2.900l-2.800-2.900z" fill="#4c82c9" opacity=".9"/><rect x="634.5" y="68.8" width="3.400" height="1.700" rx=".5" fill="#e4edf9"/>
<path d="M573.5 109.5h5.600v3.300l-2.800 2.900l-2.800-2.900z" fill="#4c82c9" opacity=".9"/><rect x="574.6" y="110.8" width="3.400" height="1.700" rx=".5" fill="#e4edf9"/>
<path d="M584.5 135.6h5.600v3.300l-2.800 2.900l-2.800-2.900z" fill="#4c82c9" opacity=".9"/><rect x="585.6" y="136.9" width="3.400" height="1.700" rx=".5" fill="#e4edf9"/>
<path d="M547.0 148.1h5.600v3.300l-2.800 2.900l-2.800-2.900z" fill="#4c82c9" opacity=".9"/><rect x="548.1" y="149.4" width="3.400" height="1.700" rx=".5" fill="#e4edf9"/>
<path d="M657.9 83.8h5.600v3.300l-2.800 2.900l-2.800-2.900z" fill="#4c82c9" opacity=".9"/><rect x="659.0" y="85.1" width="3.400" height="1.700" rx=".5" fill="#e4edf9"/>
<g fill="none" stroke="#3580be" stroke-width="1.900" stroke-linejoin="round">
<polyline points="670.4,280.3 700.0,284.0 760.0,326.0 840.0,333.5 869.3,304.7 904.0,266.4" stroke-width="1.200"/>
<polyline points="670.4,281.3 681.0,282.3 699.5,286.2 704.4,297.2 708.3,302.0 715.0,310.0 721.9,311.7 729.5,316.0 736.0,317.4 741.0,317.0 753.4,320.2 758.7,323.8 770.0,330.9 778.9,330.6 791.7,333.4 803.8,331.3 823.6,329.8 840.0,331.7 852.3,323.8 869.3,304.7 879.0,293.0 880.0,286.6 892.0,278.5 897.0,274.5 904.0,266.4 908.0,260.6 919.0,263.5 931.7,265.0"/>
<polyline points="931.7,265.0 945.0,257.0 953.0,238.0 955.4,231.7 964.0,228.2 972.6,228.2 978.6,233.9 993.7,228.2 998.7,224.0 1009.8,216.8 1015.7,212.6 1021.7,207.4 1026.4,202.6 1031.0,199.0 1041.3,184.4 1051.3,181.3 1055.3,175.4 1056.7,164.3"/>
<polyline points="931.7,265.0 934.8,246.4 955.4,231.7 993.7,228.2 1031.0,199.0"/>
<polyline points="1055.3,175.4 1059.6,179.0 1062.0,199.0 1059.6,202.6 1044.0,209.7 1032.8,209.7 1031.0,199.0"/>
<polyline points="1032.8,209.7 1039.4,216.4 1043.0,233.4 1044.0,238.0 1045.3,248.8 1050.0,249.5 1043.0,254.0"/>
</g>
<g fill="#f0384c">
<circle cx="670.4" cy="281.3" r="2.300"/>
<circle cx="681.0" cy="282.3" r="2.300"/>
<circle cx="699.5" cy="286.2" r="2.300"/>
<circle cx="704.4" cy="297.2" r="2.300"/>
<circle cx="708.3" cy="302.0" r="2.300"/>
<circle cx="715.0" cy="310.0" r="2.300"/>
<circle cx="721.9" cy="311.7" r="2.300"/>
<circle cx="729.5" cy="316.0" r="2.300"/>
<circle cx="736.0" cy="317.4" r="2.300"/>
<circle cx="741.0" cy="317.0" r="2.300"/>
<circle cx="753.4" cy="320.2" r="2.300"/>
<circle cx="758.7" cy="323.8" r="2.300"/>
<circle cx="770.0" cy="330.9" r="2.300"/>
<circle cx="778.9" cy="330.6" r="2.300"/>
<circle cx="791.7" cy="333.4" r="2.300"/>
<circle cx="803.8" cy="331.3" r="2.300"/>
<circle cx="823.6" cy="329.8" r="2.300"/>
<circle cx="840.0" cy="331.7" r="2.300"/>
<circle cx="852.3" cy="323.8" r="2.300"/>
<circle cx="869.3" cy="304.7" r="2.300"/>
<circle cx="879.0" cy="293.0" r="2.300"/>
<circle cx="880.0" cy="286.6" r="2.300"/>
<circle cx="892.0" cy="278.5" r="2.300"/>
<circle cx="897.0" cy="274.5" r="2.300"/>
<circle cx="904.0" cy="266.4" r="2.300"/>
<circle cx="908.0" cy="260.6" r="2.300"/>
<circle cx="919.0" cy="263.5" r="2.300"/>
<circle cx="931.7" cy="265.0" r="2.300"/>
<circle cx="945.0" cy="257.0" r="2.300"/>
<circle cx="953.0" cy="238.0" r="2.300"/>
<circle cx="955.4" cy="231.7" r="2.300"/>
<circle cx="964.0" cy="228.2" r="2.300"/>
<circle cx="972.6" cy="228.2" r="2.300"/>
<circle cx="978.6" cy="233.9" r="2.300"/>
<circle cx="993.7" cy="228.2" r="2.300"/>
<circle cx="998.7" cy="224.0" r="2.300"/>
<circle cx="1009.8" cy="216.8" r="2.300"/>
<circle cx="1015.7" cy="212.6" r="2.300"/>
<circle cx="1021.7" cy="207.4" r="2.300"/>
<circle cx="1026.4" cy="202.6" r="2.300"/>
<circle cx="1031.0" cy="199.0" r="2.300"/>
<circle cx="1041.3" cy="184.4" r="2.300"/>
<circle cx="1051.3" cy="181.3" r="2.300"/>
<circle cx="1055.3" cy="175.4" r="2.300"/>
<circle cx="1056.7" cy="164.3" r="2.300"/>
<circle cx="934.8" cy="246.4" r="2.300"/>
<circle cx="1059.6" cy="179.0" r="2.300"/>
<circle cx="1062.0" cy="199.0" r="2.300"/>
<circle cx="1059.6" cy="202.6" r="2.300"/>
<circle cx="1044.0" cy="209.7" r="2.300"/>
<circle cx="1032.8" cy="209.7" r="2.300"/>
<circle cx="1039.4" cy="216.4" r="2.300"/>
<circle cx="1043.0" cy="233.4" r="2.300"/>
<circle cx="1044.0" cy="238.0" r="2.300"/>
<circle cx="1045.3" cy="248.8" r="2.300"/>
<circle cx="1050.0" cy="249.5" r="2.300"/>
<circle cx="1043.0" cy="254.0" r="2.300"/>
<circle cx="673.0" cy="281.5" r="2.200"/>
<circle cx="676.0" cy="281.8" r="2.200"/>
<circle cx="700.5" cy="289.0" r="2.200"/>
<circle cx="864.0" cy="305.5" r="2.200"/>
<circle cx="866.5" cy="303.0" r="2.200"/>
<circle cx="872.0" cy="304.0" r="2.200"/>
<circle cx="851.0" cy="325.5" r="2.200"/>
<circle cx="787.0" cy="333.0" r="2.200"/>
<circle cx="789.5" cy="333.6" r="2.200"/>
<circle cx="822.0" cy="329.8" r="2.200"/>
<circle cx="826.0" cy="329.9" r="2.200"/>
<circle cx="1046.0" cy="250.5" r="2.200"/>
<circle cx="1048.0" cy="248.0" r="2.200"/>
<circle cx="1046.5" cy="246.0" r="2.200"/>
<circle cx="1028.0" cy="205.0" r="2.200"/>
<circle cx="1024.0" cy="201.0" r="2.200"/>
<circle cx="1018.0" cy="210.0" r="2.200"/>
<circle cx="1043.5" cy="236.0" r="2.200"/>
<circle cx="934.0" cy="265.0" r="2.200"/>
<circle cx="929.5" cy="265.0" r="2.200"/>
<circle cx="1058.0" cy="176.5" r="2.200"/>
</g>
<circle cx="1044.300" cy="209.600" r="2.600" fill="#f4ee3a"/><circle cx="1056.700" cy="164.200" r="2.900" fill="#f0384c"/><circle cx="1066" cy="198" r="2.400" fill="#f0384c"/><circle cx="1070" cy="197" r="2.400" fill="#f0384c"/><circle cx="1073" cy="190" r="2" fill="#f0384c"/>
<rect x="860.500" y="302.500" width="7" height="5.500" fill="#f4511e"/><circle cx="868.500" cy="303.500" r="1.500" fill="#f6a21a"/>
<g transform="translate(-0.800,0.300)">
<rect x="1059.500" y="177.800" width="14.500" height="9.500" fill="#f4511e"/><rect x="1059.500" y="187" width="12.500" height="11" fill="#f6d40e"/><rect x="1066" y="186" width="7" height="9" fill="#f58a1f" opacity=".9"/>
<text x="1066.700" y="183.600" font-size="4" fill="#ffd9c9" text-anchor="middle" font-family="Liberation Sans, sans-serif" font-weight="bold">328</text>
<circle cx="1064.500" cy="188.500" r="3" fill="#2e9e3c"/><rect x="1064" y="189" width="1.300" height="8" fill="#222"/><circle cx="1068.800" cy="189.800" r="2.300" fill="#1d7a2a"/><rect x="1068.300" y="190" width="1.200" height="7.500" fill="#111"/><rect x="1070" y="193" width="3" height="4" fill="#333"/>
</g>
<rect x="1020" y="416.500" width="83" height="2.500" fill="#b9d2f4"/><text x="1034" y="415" font-size="3" fill="#7c93b8" font-family="Liberation Sans, sans-serif">25 miles</text><text x="1094" y="415" font-size="3" fill="#7c93b8" font-family="Liberation Sans, sans-serif">50 km</text>
<text x="1104" y="425.500" font-size="3" fill="#7f95b9" text-anchor="end" font-family="Liberation Sans, sans-serif">© 2023 Zenrin © 2023 Microsoft Corporation  Terms</text>
</svg>
<svg class="b" style="left:1008.60px;top:62.30px;width:10.40px;height:10.40px" viewBox="-10 -10 20 20"><circle r="8.800" fill="#fff" stroke="#666" stroke-width="1.300"/><circle r="4.800" fill="none" stroke="#444" stroke-width="1.400"/></svg>
<svg class="b" style="left:1023.20px;top:62.30px;width:10.40px;height:10.40px" viewBox="-10 -10 20 20"><circle r="8.800" fill="#fff" stroke="#666" stroke-width="1.300"/><path d="M-4.500 0h9" stroke="#444" stroke-width="1.400"/></svg>
<svg class="b" style="left:1038.30px;top:62.30px;width:10.40px;height:10.40px" viewBox="-10 -10 20 20"><circle r="8.800" fill="#fff" stroke="#666" stroke-width="1.300"/><path d="M-4.500 0h9M0 -4.500v9" stroke="#444" stroke-width="1.400"/></svg>
<div class="b" style="left:1052.70px;top:61.50px;width:38.00px;height:12.00px;background:#fff;border:0.9px solid #555;border-radius:6px;box-sizing:border-box;"></div>
<svg class="b" style="left:1057.500px;top:64.500px;width:6px;height:6px" viewBox="0 0 12 12"><circle cx="6" cy="6" r="5" fill="#e9d3d3" stroke="#b9a" stroke-width="1"/><path d="M2 3l8 6" stroke="#caa" stroke-width="1.500"/></svg>
<span class="t" style="transform-origin:0 0;transform:translate(1066.00px,64.70px) scale(0.1250,0.1250) rotate(0.25deg);font-size:44.48px;color:#333;">Road ▾</span>
<div class="b" style="left:1097.40px;top:61.80px;width:27.30px;height:11.30px;background:#fff;border:0.9px solid #555;border-radius:6px;box-sizing:border-box;"></div>
<span class="t" style="transform-origin:50% 0;transform:translate(1111.00px,64.69px) translateX(-50%) scale(0.1250,0.1250) rotate(0.25deg);font-size:41.68px;color:#444;">Icon Info</span>
<!-- dialog -->
<div class="b" style="left:0.00px;top:178.00px;width:670.00px;height:498.00px;background:#f5f5f6;"></div>
<div class="b" style="left:0.00px;top:177.70px;width:670.00px;height:25.30px;background:#1439f7;"></div>
<span class="t" style="transform-origin:50% 0;transform:translate(335.00px,184.54px) translateX(-50%) scale(0.1250,0.1250);font-size:95.76px;color:#fff;">Shipment Details</span>
<svg class="b" style="left:657.500px;top:187.200px;width:6px;height:6px" viewBox="0 0 10 10"><path d="M1 1l8 8M9 1l-8 8" stroke="#dfe5ff" stroke-width="1.700"/></svg>
<div class="b" style="left:6.70px;top:208.50px;width:143.90px;height:459.50px;background:#fff;box-shadow:0 0 1.500px rgba(0,0,0,.18);"></div>
<div class="b" style="left:22.70px;top:222.00px;width:43.10px;height:45.50px;background:#0b4b8c;border-radius:4px;"></div>
<span class="t" style="transform-origin:50% 0;transform:translate(44.30px,240.96px) translateX(-50%) scale(0.1250,0.1250) rotate(0.25deg);font-size:56.96px;color:#fff;font-weight:bold;">EMERSON.</span>
<span class="t" style="transform-origin:0 0;transform:translate(83.00px,235.17px) scale(0.1250,0.1250) rotate(0.25deg);font-size:59.68px;color:#3d74b8;">1000332039</span>
<span class="t" style="transform-origin:0 0;transform:translate(83.00px,245.98px) scale(0.1250,0.1250) rotate(0.25deg);font-size:59.60px;color:#3d74b8;">Battery: 9%</span>
<div class="b" style="left:12.00px;top:283.50px;width:64.50px;height:14.50px;background:#fff;border:0.8px solid #e1e1e1;border-radius:2px;box-sizing:border-box;"></div>
<span class="t" style="transform-origin:50% 0;transform:translate(44.30px,287.33px) translateX(-50%) scale(0.1250,0.1250) rotate(0.25deg);font-size:51.44px;color:#2f5f9e;">Distance To</span>
<div class="b" style="left:11.00px;top:306.00px;width:135.00px;height:0.80px;background:#ececec;"></div>
<span class="t" style="transform-origin:0 0;transform:translate(11.00px,316.46px) scale(0.1250,0.1250);font-size:61.28px;color:#5a5a5a;">Name: <span style="color:#3f83d6">n/a</span></span>
<span class="t" style="transform-origin:0 0;transform:translate(11.00px,330.95px) scale(0.1250,0.1250);font-size:61.28px;color:#5a5a5a;">Status: <span style="color:#3f83d6">n/a</span></span>
<span class="t" style="transform-origin:0 0;transform:translate(11.00px,345.44px) scale(0.1250,0.1250);font-size:61.28px;color:#5a5a5a;">Plate Number: <span style="color:#3f83d6">n/a</span></span>
<span class="t" style="transform-origin:0 0;transform:translate(11.00px,359.93px) scale(0.1250,0.1250);font-size:61.28px;color:#5a5a5a;">Container Number: <span style="color:#3f83d6">n/a</span></span>
<span class="t" style="transform-origin:0 0;transform:translate(11.00px,374.42px) scale(0.1250,0.1250);font-size:61.28px;color:#5a5a5a;">Driver Phone Number: <span style="color:#3f83d6">n/a</span></span>
<span class="t" style="transform-origin:0 0;transform:translate(11.00px,388.91px) scale(0.1250,0.1250);font-size:61.28px;color:#5a5a5a;">Origin: <span style="color:#3f83d6">n/a</span></span>
<span class="t" style="transform-origin:0 0;transform:translate(11.00px,403.40px) scale(0.1250,0.1250);font-size:61.28px;color:#5a5a5a;">Destination: <span style="color:#3f83d6">n/a</span></span>
<span class="t" style="transform-origin:0 0;transform:translate(11.00px,417.89px) scale(0.1250,0.1250);font-size:61.28px;color:#5a5a5a;">Carrier Name: <span style="color:#3f83d6">n/a</span></span>
<span class="t" style="transform-origin:0 0;transform:translate(11.00px,432.38px) scale(0.1250,0.1250);font-size:61.28px;color:#5a5a5a;">Additional Alert Contacts: <span style="color:#3f83d6">n/a</span></span>
<span class="t" style="transform-origin:0 0;transform:translate(11.00px,446.87px) scale(0.1250,0.1250);font-size:61.28px;color:#5a5a5a;">Start Date: <span style="color:#3f83d6">n/a</span></span>
<span class="t" style="transform-origin:0 0;transform:translate(11.00px,461.36px) scale(0.1250,0.1250);font-size:61.28px;color:#5a5a5a;">Scheduled Start: <span style="color:#3f83d6">n/a</span></span>
<span class="t" style="transform-origin:0 0;transform:translate(11.00px,475.85px) scale(0.1250,0.1250);font-size:61.28px;color:#5a5a5a;">End Date: <span style="color:#3f83d6">n/a</span></span>
<span class="t" style="transform-origin:0 0;transform:translate(11.00px,490.34px) scale(0.1250,0.1250);font-size:61.28px;color:#5a5a5a;">Scheduled End: <span style="color:#3f83d6">n/a</span></span>
<span class="t" style="transform-origin:0 0;transform:translate(11.00px,504.83px) scale(0.1250,0.1250);font-size:61.28px;color:#5a5a5a;">Shipment Duration: <span style="color:#3f83d6">27d:19h:21m</span></span>
<span class="t" style="transform-origin:0 0;transform:translate(11.00px,519.32px) scale(0.1250,0.1250);font-size:61.28px;color:#5a5a5a;">Temperature: <span style="color:#3f83d6">n/a</span></span>
<span class="t" style="transform-origin:0 0;transform:translate(11.00px,533.81px) scale(0.1250,0.1250);font-size:61.28px;color:#5a5a5a;">Humidity: <span style="color:#3f83d6">n/a</span></span>
<span class="t" style="transform-origin:0 0;transform:translate(11.00px,548.30px) scale(0.1250,0.1250);font-size:61.28px;color:#5a5a5a;">Probe Temp: <span style="color:#3f83d6">n/a</span></span>
<span class="t" style="transform-origin:0 0;transform:translate(11.00px,562.79px) scale(0.1250,0.1250);font-size:61.28px;color:#5a5a5a;">Mean Kinetic Temperature: <span style="color:#3f83d6">24.2°C</span></span>
<span class="t" style="transform-origin:0 0;transform:translate(11.00px,577.28px) scale(0.1250,0.1250);font-size:61.28px;color:#5a5a5a;">Max High Temp: <span style="color:#3f83d6">33.1°C</span></span>
<span class="t" style="transform-origin:0 0;transform:translate(11.00px,591.77px) scale(0.1250,0.1250);font-size:61.28px;color:#5a5a5a;">Max Low Temp: <span style="color:#3f83d6">0°C</span></span>
<div class="b" style="left:151.60px;top:208.00px;width:0.80px;height:464.00px;background:#e6e6e8;"></div>
<span class="t" style="transform-origin:0 0;transform:translate(163.60px,212.37px) scale(0.1250,0.1250) rotate(0.25deg);font-size:59.76px;color:#3d7cc9;">Sensor Chart</span>
<div class="b" style="left:158.00px;top:221.20px;width:54.80px;height:2.20px;background:#2484d8;"></div>
<span class="t" style="transform-origin:0 0;transform:translate(222.70px,212.28px) scale(0.1250,0.1250) rotate(0.25deg);font-size:61.04px;color:#5e5e5e;">Alerts Summary</span>
<div class="b" style="left:156.00px;top:229.30px;width:508.00px;height:441.70px;background:#fff;"></div>
<div class="b" style="left:162.00px;top:234.70px;width:53.00px;height:14.30px;border:0.8px solid #dedede;border-radius:2px;box-sizing:border-box;background:#fff;"></div><span class="t" style="transform-origin:50% 0;transform:translate(188.50px,238.65px) translateX(-50%) scale(0.1250,0.1250) rotate(0.25deg);font-size:50.40px;color:#8c8c8c;">10/01/2023</span>
<div class="b" style="left:215.00px;top:234.20px;width:14.40px;height:15.30px;border:1px solid #6f9fdc;border-radius:2px;box-sizing:border-box;background:#e6effb;"></div><div class="b" style="left:218.60px;top:238.65px;width:7.20px;height:7.00px;background:#4a78bd;border-radius:0.8px;"></div><div class="b" style="left:219.40px;top:240.65px;width:5.60px;height:4.20px;background:#d9e5f6;"></div><div class="b" style="left:220.00px;top:237.85px;width:1.00px;height:1.60px;background:#4a78bd;"></div><div class="b" style="left:223.40px;top:237.85px;width:1.00px;height:1.60px;background:#4a78bd;"></div>
<div class="b" style="left:232.60px;top:234.70px;width:14.90px;height:14.30px;border:0.8px solid #dedede;border-radius:2px;box-sizing:border-box;background:#fff;"></div><span class="t" style="transform-origin:50% 0;transform:translate(240.05px,238.65px) translateX(-50%) scale(0.1250,0.1250) rotate(0.25deg);font-size:50.40px;color:#666;">00</span>
<span class="t" style="transform-origin:50% 0;transform:translate(251.30px,237.18px) translateX(-50%) scale(0.1250,0.1250) rotate(0.25deg);font-size:64.00px;color:#555;font-weight:bold;">:</span>
<div class="b" style="left:255.50px;top:234.70px;width:15.30px;height:14.30px;border:0.8px solid #dedede;border-radius:2px;box-sizing:border-box;background:#fff;"></div><span class="t" style="transform-origin:50% 0;transform:translate(263.15px,238.65px) translateX(-50%) scale(0.1250,0.1250) rotate(0.25deg);font-size:50.40px;color:#666;">00</span>
<div class="b" style="left:279.50px;top:234.70px;width:52.90px;height:14.30px;border:0.8px solid #dedede;border-radius:2px;box-sizing:border-box;background:#fff;"></div><span class="t" style="transform-origin:50% 0;transform:translate(305.95px,238.65px) translateX(-50%) scale(0.1250,0.1250) rotate(0.25deg);font-size:50.40px;color:#8c8c8c;">10/31/2023</span>
<div class="b" style="left:332.40px;top:234.20px;width:14.40px;height:15.30px;border:1px solid #6f9fdc;border-radius:2px;box-sizing:border-box;background:#e6effb;"></div><div class="b" style="left:336.00px;top:238.65px;width:7.20px;height:7.00px;background:#4a78bd;border-radius:0.8px;"></div><div class="b" style="left:336.80px;top:240.65px;width:5.60px;height:4.20px;background:#d9e5f6;"></div><div class="b" style="left:337.40px;top:237.85px;width:1.00px;height:1.60px;background:#4a78bd;"></div><div class="b" style="left:340.80px;top:237.85px;width:1.00px;height:1.60px;background:#4a78bd;"></div>
<div class="b" style="left:349.80px;top:234.70px;width:14.80px;height:14.30px;border:0.8px solid #dedede;border-radius:2px;box-sizing:border-box;background:#fff;"></div><span class="t" style="transform-origin:50% 0;transform:translate(357.20px,238.65px) translateX(-50%) scale(0.1250,0.1250) rotate(0.25deg);font-size:50.40px;color:#666;">04</span>
<span class="t" style="transform-origin:50% 0;transform:translate(368.50px,237.18px) translateX(-50%) scale(0.1250,0.1250) rotate(0.25deg);font-size:64.00px;color:#555;font-weight:bold;">:</span>
<div class="b" style="left:373.00px;top:234.70px;width:15.00px;height:14.30px;border:0.8px solid #dedede;border-radius:2px;box-sizing:border-box;background:#fff;"></div><span class="t" style="transform-origin:50% 0;transform:translate(380.50px,238.65px) translateX(-50%) scale(0.1250,0.1250) rotate(0.25deg);font-size:50.40px;color:#666;">30</span>
<div class="b" style="left:398.00px;top:234.00px;width:30.00px;height:15.00px;background:#4cae3d;border-radius:2px;"></div>
<span class="t" style="transform-origin:50% 0;transform:translate(413.00px,238.39px) translateX(-50%) scale(0.1250,0.1250) rotate(0.25deg);font-size:49.04px;color:#e9f7e4;">Reset</span>
<span class="t" style="transform-origin:0 0;transform:translate(163.00px,261.97px) scale(0.1250,0.1250) rotate(0.25deg);font-size:53.84px;color:#6a6a6a;">Sensors</span>
<div class="b" style="left:196.40px;top:262.00px;width:8.20px;height:8.20px;border:0.9px solid #4d8bd6;box-sizing:border-box;border-radius:1px;background:#fff;"></div><svg class="b" style="left:196.40px;top:262.00px;width:8.20px;height:8.20px" viewBox="0 0 10 10"><path d="M2.300 5.200l2 2.100 3.500-4.500" fill="none" stroke="#2b74cf" stroke-width="1.250"/></svg>
<span class="t" style="transform-origin:0 0;transform:translate(207.80px,262.46px) scale(0.1250,0.1250) rotate(0.25deg);font-size:58.40px;color:#6a6a6a;">Temperature</span>
<div class="b" style="left:196.40px;top:274.30px;width:8.20px;height:8.20px;border:0.9px solid #4d8bd6;box-sizing:border-box;border-radius:1px;background:#fff;"></div><svg class="b" style="left:196.40px;top:274.30px;width:8.20px;height:8.20px" viewBox="0 0 10 10"><path d="M2.300 5.200l2 2.100 3.500-4.500" fill="none" stroke="#2b74cf" stroke-width="1.250"/></svg>
<span class="t" style="transform-origin:0 0;transform:translate(207.80px,274.84px) scale(0.1250,0.1250) rotate(0.25deg);font-size:58.64px;color:#6a6a6a;">Humidity</span>
<div class="b" style="left:196.40px;top:286.70px;width:8.20px;height:8.20px;border:0.9px solid #4d8bd6;box-sizing:border-box;border-radius:1px;background:#fff;"></div><svg class="b" style="left:196.40px;top:286.70px;width:8.20px;height:8.20px" viewBox="0 0 10 10"><path d="M2.300 5.200l2 2.100 3.500-4.500" fill="none" stroke="#2b74cf" stroke-width="1.250"/></svg>
<span class="t" style="transform-origin:0 0;transform:translate(207.80px,287.33px) scale(0.1250,0.1250) rotate(0.25deg);font-size:57.36px;color:#6a6a6a;">Probe Temperature</span>
<div class="b" style="left:302.00px;top:262.00px;width:8.20px;height:8.20px;border:0.9px solid #4d8bd6;box-sizing:border-box;border-radius:1px;background:#fff;"></div><svg class="b" style="left:302.00px;top:262.00px;width:8.20px;height:8.20px" viewBox="0 0 10 10"><path d="M2.300 5.200l2 2.100 3.500-4.500" fill="none" stroke="#2b74cf" stroke-width="1.250"/></svg>
<span class="t" style="transform-origin:0 0;transform:translate(313.80px,262.64px) scale(0.1250,0.1250) rotate(0.25deg);font-size:55.76px;color:#6a6a6a;">Display Alerts</span>
<div class="b" style="left:357.00px;top:260.00px;width:7.60px;height:6.50px;background:#e5343a;"></div>
<span class="t" style="transform-origin:50% 0;transform:translate(360.80px,260.70px) translateX(-50%) scale(0.1250,0.1250) rotate(0.25deg);font-size:40.00px;color:#fff;">67</span>
<span class="t" style="transform-origin:0 0;transform:translate(588.00px,263.52px) scale(0.1250,0.1250) rotate(0.25deg);font-size:51.60px;color:#2f66ad;">Min/Max Chart Values</span>
<span class="t" style="transform-origin:0 0;transform:translate(162.00px,302.94px) scale(0.1250,0.1250) rotate(0.25deg);font-size:55.68px;color:#6a6a6a;">Background Color</span>
<div class="b" style="left:224.40px;top:303.30px;width:7.20px;height:7.20px;border-radius:50%;background:#1f6fd6;"></div><div class="b" style="left:226.50px;top:305.40px;width:3.00px;height:3.00px;border-radius:50%;background:#fff;"></div>
<span class="t" style="transform-origin:0 0;transform:translate(232.60px,302.63px) scale(0.1250,0.1250) rotate(0.25deg);font-size:60.24px;color:#6a6a6a;">None</span>
<div class="b" style="left:258.60px;top:303.90px;width:6.80px;height:6.80px;border-radius:50%;border:0.8px solid #bdbdbd;box-sizing:border-box;background:#fff;"></div>
<span class="t" style="transform-origin:0 0;transform:translate(266.60px,302.71px) scale(0.1250,0.1250);font-size:59.12px;color:#6a6a6a;">Show Sensor Range Background Color</span>
<div class="b" style="left:403.40px;top:303.90px;width:6.80px;height:6.80px;border-radius:50%;border:0.8px solid #bdbdbd;box-sizing:border-box;background:#fff;"></div>
<span class="t" style="transform-origin:0 0;transform:translate(411.00px,302.60px) scale(0.1250,0.1250);font-size:60.72px;color:#6a6a6a;">Show Location Background Color</span>
<div class="b" style="left:582.30px;top:301.00px;width:16.50px;height:16.50px;background:#e9141a;border-radius:2.500px;"></div><svg class="b" style="left:586.05px;top:304.20px;width:9px;height:10px" viewBox="0 0 18 20"><path d="M3 1.500h8l4 4v13H3z" fill="none" stroke="#fff" stroke-width="1.600"/><path d="M6 14c2-3 3-6 3-8 0 3 2 6 4 7-3 0-5 0-7 1z" fill="none" stroke="#fff" stroke-width="1.200"/></svg>
<div class="b" style="left:605.00px;top:301.00px;width:16.00px;height:16.50px;background:#53b03e;border-radius:2.500px;"></div><svg class="b" style="left:608.50px;top:304.20px;width:9px;height:10px" viewBox="0 0 18 20"><path d="M3 1.500h8l4 4v13H3z" fill="none" stroke="#fff" stroke-width="1.600"/><path d="M6.500 8l5 7M11.500 8l-5 7" stroke="#fff" stroke-width="1.600"/></svg>
<div class="b" style="left:627.00px;top:301.00px;width:17.00px;height:16.50px;background:#1e6bb2;border-radius:2.500px;"></div><svg class="b" style="left:631.00px;top:304.20px;width:9px;height:10px" viewBox="0 0 18 20"><rect x="2" y="4.500" width="14" height="11" rx="1.500" fill="none" stroke="#fff" stroke-width="1.600"/><path d="M2.500 5.500l6.500 5.500 6.500-5.500" fill="none" stroke="#fff" stroke-width="1.500"/></svg>
<div class="b" style="left:657.40px;top:229.50px;width:6.20px;height:434.50px;background:#f1f1f1;"></div>
<div class="b" style="left:657.40px;top:230.00px;width:6.20px;height:350.00px;background:#a3a3a3;border-radius:3px 3px 0 0;"></div>
<div class="b" style="left:657.40px;top:580.00px;width:6.20px;height:83.50px;background:#cacaca;border-radius:0 0 3px 3px;"></div>
<span class="t" style="transform-origin:50% 0;transform:translate(660.50px,231.27px) translateX(-50%) scale(0.1250,0.1250) rotate(0.25deg);font-size:25.60px;color:#333;">▲</span>
<span class="t" style="transform-origin:50% 0;transform:translate(660.50px,657.56px) translateX(-50%) scale(0.1250,0.1250) rotate(0.25deg);font-size:28.80px;color:#444;">▼</span>
<div class="b" style="left:156.00px;top:664.30px;width:490.00px;height:5.50px;background:#a9a9a9;"></div>
<div class="b" style="left:156.00px;top:664.30px;width:5.00px;height:5.50px;background:#bdbdbd;"></div>
<div class="b" style="left:646.00px;top:664.30px;width:11.00px;height:5.50px;background:#d4d4d4;"></div>
<span class="t" style="transform-origin:50% 0;transform:translate(159.00px,665.16px) translateX(-50%) scale(0.1250,0.1250) rotate(0.25deg);font-size:27.20px;color:#333;">◀</span>
<span class="t" style="transform-origin:50% 0;transform:translate(653.50px,665.16px) translateX(-50%) scale(0.1250,0.1250) rotate(0.25deg);font-size:27.20px;color:#333;">▶</span>
<div class="b" style="left:169.20px;top:536.40px;width:7.60px;height:7.60px;border:0.9px solid #d0d0d0;box-sizing:border-box;border-radius:1px;background:#fff;"></div>
<span class="t" style="transform-origin:0 0;transform:translate(180.60px,536.97px) scale(0.1250,0.1250) rotate(0.25deg);font-size:53.84px;color:#5f74a0;">Show Geo-Fence</span>
<!-- chart -->
<div class="b" style="left:161.70px;top:321.60px;width:487.30px;height:208.20px;border:2.300px solid #9e9e9e;border-radius:5.500px;box-sizing:border-box;background:#fff;"></div>
<svg class="b" style="left:160px;top:320px;width:490px;height:212px" viewBox="160 320 490 212" font-family="Liberation Sans, sans-serif">
<line x1="213.4" y1="337.20" x2="605.8" y2="337.20" stroke="#e9e9e9" stroke-width="0.700"/>
<line x1="213.4" y1="354.68" x2="605.8" y2="354.68" stroke="#e9e9e9" stroke-width="0.700"/>
<line x1="213.4" y1="372.15" x2="605.8" y2="372.15" stroke="#e9e9e9" stroke-width="0.700"/>
<line x1="213.4" y1="389.62" x2="605.8" y2="389.62" stroke="#e9e9e9" stroke-width="0.700"/>
<line x1="213.4" y1="407.10" x2="605.8" y2="407.10" stroke="#e9e9e9" stroke-width="0.700"/>
<line x1="213.4" y1="424.57" x2="605.8" y2="424.57" stroke="#e9e9e9" stroke-width="0.700"/>
<line x1="213.4" y1="442.05" x2="605.8" y2="442.05" stroke="#e9e9e9" stroke-width="0.700"/>
<line x1="213.4" y1="459.52" x2="605.8" y2="459.52" stroke="#e9e9e9" stroke-width="0.700"/>
<line x1="213.4" y1="477.00" x2="605.8" y2="477.00" stroke="#e9e9e9" stroke-width="0.700"/>
<rect x="213.4" y="337.2" width="392.4" height="139.8" fill="none" stroke="#9b9b9b" stroke-width="0.800"/>
<line x1="209.9" y1="337.20" x2="213.4" y2="337.20" stroke="#333" stroke-width="0.700"/>
<text x="205.6" y="339.40" font-size="6.150" font-weight="bold" fill="#333" text-anchor="end">58 °C</text>
<line x1="605.8" y1="337.20" x2="609.3" y2="337.20" stroke="#333" stroke-width="0.700"/>
<text x="626.1" y="339.40" font-size="6.150" font-weight="bold" fill="#333" text-anchor="end">66%</text>
<line x1="209.9" y1="355.14" x2="213.4" y2="355.14" stroke="#333" stroke-width="0.700"/>
<text x="205.6" y="357.34" font-size="6.150" font-weight="bold" fill="#333" text-anchor="end">24 °C</text>
<line x1="605.8" y1="351.18" x2="609.3" y2="351.18" stroke="#333" stroke-width="0.700"/>
<text x="626.1" y="353.38" font-size="6.150" font-weight="bold" fill="#333" text-anchor="end">59%</text>
<line x1="209.9" y1="372.55" x2="213.4" y2="372.55" stroke="#333" stroke-width="0.700"/>
<text x="205.6" y="374.75" font-size="6.150" font-weight="bold" fill="#333" text-anchor="end">-9 °C</text>
<line x1="605.8" y1="369.15" x2="609.3" y2="369.15" stroke="#333" stroke-width="0.700"/>
<text x="626.1" y="371.35" font-size="6.150" font-weight="bold" fill="#333" text-anchor="end">50%</text>
<line x1="209.9" y1="389.95" x2="213.4" y2="389.95" stroke="#333" stroke-width="0.700"/>
<text x="205.6" y="392.15" font-size="6.150" font-weight="bold" fill="#333" text-anchor="end">-42 °C</text>
<line x1="605.8" y1="387.13" x2="609.3" y2="387.13" stroke="#333" stroke-width="0.700"/>
<text x="626.1" y="389.33" font-size="6.150" font-weight="bold" fill="#333" text-anchor="end">41%</text>
<line x1="209.9" y1="407.36" x2="213.4" y2="407.36" stroke="#333" stroke-width="0.700"/>
<text x="205.6" y="409.56" font-size="6.150" font-weight="bold" fill="#333" text-anchor="end">-75 °C</text>
<line x1="605.8" y1="405.10" x2="609.3" y2="405.10" stroke="#333" stroke-width="0.700"/>
<text x="626.1" y="407.30" font-size="6.150" font-weight="bold" fill="#333" text-anchor="end">32%</text>
<line x1="209.9" y1="424.77" x2="213.4" y2="424.77" stroke="#333" stroke-width="0.700"/>
<text x="205.6" y="426.97" font-size="6.150" font-weight="bold" fill="#333" text-anchor="end">-108 °C</text>
<line x1="605.8" y1="423.08" x2="609.3" y2="423.08" stroke="#333" stroke-width="0.700"/>
<text x="626.1" y="425.28" font-size="6.150" font-weight="bold" fill="#333" text-anchor="end">23%</text>
<line x1="209.9" y1="442.18" x2="213.4" y2="442.18" stroke="#333" stroke-width="0.700"/>
<text x="205.6" y="444.38" font-size="6.150" font-weight="bold" fill="#333" text-anchor="end">-141 °C</text>
<line x1="605.8" y1="441.05" x2="609.3" y2="441.05" stroke="#333" stroke-width="0.700"/>
<text x="626.1" y="443.25" font-size="6.150" font-weight="bold" fill="#333" text-anchor="end">14%</text>
<line x1="209.9" y1="459.59" x2="213.4" y2="459.59" stroke="#333" stroke-width="0.700"/>
<text x="205.6" y="461.79" font-size="6.150" font-weight="bold" fill="#333" text-anchor="end">-174 °C</text>
<line x1="605.8" y1="459.03" x2="609.3" y2="459.03" stroke="#333" stroke-width="0.700"/>
<text x="626.1" y="461.23" font-size="6.150" font-weight="bold" fill="#333" text-anchor="end">5%</text>
<line x1="209.9" y1="477.00" x2="213.4" y2="477.00" stroke="#333" stroke-width="0.700"/>
<text x="205.6" y="479.20" font-size="6.150" font-weight="bold" fill="#333" text-anchor="end">-207 °C</text>
<line x1="605.8" y1="477.00" x2="609.3" y2="477.00" stroke="#333" stroke-width="0.700"/>
<text x="626.1" y="479.20" font-size="6.150" font-weight="bold" fill="#333" text-anchor="end">-4%</text>
<line x1="213.40" y1="477.0" x2="213.40" y2="480.0" stroke="#333" stroke-width="0.700"/>
<text x="213.40" y="487.200" font-size="5.700" font-weight="bold" fill="#333" text-anchor="middle">10/01/2023</text>
<text x="213.40" y="494" font-size="5.700" font-weight="bold" fill="#333" text-anchor="middle">00:00</text>
<line x1="278.80" y1="477.0" x2="278.80" y2="480.0" stroke="#333" stroke-width="0.700"/>
<text x="278.80" y="487.200" font-size="5.700" font-weight="bold" fill="#333" text-anchor="middle">10/06/2023</text>
<text x="278.80" y="494" font-size="5.700" font-weight="bold" fill="#333" text-anchor="middle">00:45</text>
<line x1="344.20" y1="477.0" x2="344.20" y2="480.0" stroke="#333" stroke-width="0.700"/>
<text x="344.20" y="487.200" font-size="5.700" font-weight="bold" fill="#333" text-anchor="middle">10/11/2023</text>
<text x="344.20" y="494" font-size="5.700" font-weight="bold" fill="#333" text-anchor="middle">01:30</text>
<line x1="409.60" y1="477.0" x2="409.60" y2="480.0" stroke="#333" stroke-width="0.700"/>
<text x="409.60" y="487.200" font-size="5.700" font-weight="bold" fill="#333" text-anchor="middle">10/16/2023</text>
<text x="409.60" y="494" font-size="5.700" font-weight="bold" fill="#333" text-anchor="middle">02:15</text>
<line x1="475.00" y1="477.0" x2="475.00" y2="480.0" stroke="#333" stroke-width="0.700"/>
<text x="475.00" y="487.200" font-size="5.700" font-weight="bold" fill="#333" text-anchor="middle">10/21/2023</text>
<text x="475.00" y="494" font-size="5.700" font-weight="bold" fill="#333" text-anchor="middle">03:00</text>
<line x1="540.40" y1="477.0" x2="540.40" y2="480.0" stroke="#333" stroke-width="0.700"/>
<text x="540.40" y="487.200" font-size="5.700" font-weight="bold" fill="#333" text-anchor="middle">10/26/2023</text>
<text x="540.40" y="494" font-size="5.700" font-weight="bold" fill="#333" text-anchor="middle">03:45</text>
<line x1="605.80" y1="477.0" x2="605.80" y2="480.0" stroke="#333" stroke-width="0.700"/>
<text x="605.80" y="487.200" font-size="5.700" font-weight="bold" fill="#333" text-anchor="middle">10/31/2023</text>
<text x="605.80" y="494" font-size="5.700" font-weight="bold" fill="#333" text-anchor="middle">04:31</text>
<text transform="translate(176.700,459.800) rotate(-90)" font-size="6.900" font-weight="bold" fill="#222">Temperature/<tspan fill="#5aa843">Probe Temperature</tspan></text>
<text transform="translate(632.600,392.500) rotate(90)" font-size="6.600" fill="#2a2ad0">Humidity</text>
<polyline points="243.96,352.20 243.96,357.08 249.96,357.08 257.72,356.19 263.27,357.52 269.93,357.52 274.37,356.19 286.58,355.75 298.79,355.53 313.66,355.31 332.09,355.31 348.73,355.31 350.95,352.20 352.06,354.86 357.61,357.08 360.94,358.41 363.16,357.08 364.94,354.42 364.70,356.90 365.40,352.90 366.60,354.10 370.00,355.50 373.60,356.70 373.90,356.90 374.60,352.90 375.80,354.10 380.80,355.50 386.00,356.70 386.30,356.90 387.00,352.90 388.20,354.10 393.20,355.50 398.40,356.70 398.70,356.90 399.40,352.90 400.60,354.10 405.80,355.50 411.20,356.70 411.50,356.90 412.20,352.90 413.40,354.10 419.20,355.50 425.20,356.70 425.50,356.90 426.20,352.90 427.40,354.10 432.85,355.50 438.50,356.70 438.80,356.90 439.50,352.90 440.70,354.10 446.15,355.50 451.80,356.70 452.10,356.90 452.80,352.90 454.00,354.10 459.40,355.50 465.00,356.70 465.30,356.90 466.00,352.90 467.20,354.10 472.40,355.50 477.80,356.70 478.10,356.90 478.80,352.90 480.00,354.10 485.15,355.50 490.50,356.70 490.80,356.90 491.50,352.90 492.70,354.10 497.90,355.50 503.30,356.70 503.60,356.90 504.30,352.90 505.50,354.10 510.75,355.50 516.20,356.70 516.50,356.90 517.20,352.90 518.40,354.10 524.10,355.50 530.00,356.70 530.30,356.90 531.00,352.90 532.20,354.10 537.40,355.50 542.80,356.70 543.10,356.90 543.80,352.90 545.00,354.10 550.15,355.50 555.50,356.70 555.80,356.90 556.50,352.90 557.70,354.10 563.15,355.50 568.80,356.70 569.10,356.90 569.80,352.90 571.00,354.10 577.60,355.50 584.40,356.70 584.70,356.90 585.40,352.90 586.60,354.10 590.35,355.50 594.30,356.70 594.60,356.90 595.30,352.90 596.50,354.10 600.90,355.50 605.50,356.70" fill="none" stroke="#111" stroke-width="1.100" stroke-linejoin="round"/>
<line x1="509.88" y1="352.20" x2="509.88" y2="362.70" stroke="#111" stroke-width="0.900"/>
<line x1="532.30" y1="352.20" x2="532.30" y2="362.70" stroke="#111" stroke-width="0.900"/>
<line x1="544.28" y1="352.20" x2="544.28" y2="362.70" stroke="#111" stroke-width="0.900"/>
<line x1="587.57" y1="352.20" x2="587.57" y2="362.70" stroke="#111" stroke-width="0.900"/>
<polyline points="244.41,383.27 244.41,357.75 249.96,357.08 256.61,356.19 258.17,351.75 259.94,357.75 261.50,364.41 263.27,357.75 265.49,359.97 268.16,363.30 270.38,369.96 272.15,366.63 273.26,372.18 276.59,381.05 281.03,386.60 286.58,391.04 287.25,393.26 292.13,396.59 297.68,401.03 298.12,389.93 298.79,405.47 299.90,397.70 305.45,403.25 313.66,407.69" fill="none" stroke="#1616d8" stroke-width="1.150" stroke-linejoin="round"/>
<polyline points="314.33,365.52 318.77,363.30 323.21,360.63 325.43,362.19 330.98,361.08 335.42,361.74 338.75,369.96 343.19,372.18 349.84,377.72 350.51,374.40 352.06,387.71 354.28,383.27 357.61,386.60 359.83,387.71 362.05,383.27 362.72,373.29 363.16,373.88 365.36,373.72 367.56,374.08 369.76,373.79 371.96,373.68 374.16,374.08 376.36,374.70 378.56,374.56 380.76,374.52 382.96,373.87 385.16,374.24 387.36,373.93 389.56,373.81 391.76,373.73 393.96,373.86 396.16,374.71 398.36,374.59 400.00,375.93 401.70,375.84 403.40,374.91 405.10,374.98 406.80,375.34 408.50,375.40 410.20,375.49 411.90,375.44 413.60,374.25 415.30,374.89 417.00,374.90 418.70,374.58 420.40,374.03 422.10,374.36 423.80,373.62 425.50,374.59 427.20,374.28 428.90,373.62 430.60,373.07 432.30,374.06 434.00,373.87 435.70,374.59 437.40,374.83 439.10,374.63 440.80,374.79 442.50,375.33 444.20,375.38 445.90,374.78 447.60,374.70 449.30,375.13 451.00,373.76 452.70,373.49 454.40,374.01 456.10,373.25 457.80,373.32 459.50,372.95 461.20,372.48 462.90,373.12 464.60,371.74 466.30,371.99 468.00,371.64 469.70,372.18 471.40,371.63 473.10,371.68 474.80,372.17 476.50,371.52 478.20,371.85 479.90,372.47 481.60,371.49 483.30,371.57 485.00,371.94 486.70,372.82 488.40,372.75 490.10,372.51 491.80,372.98 493.50,373.11 495.20,373.84 496.90,373.60 498.60,374.83 500.30,375.39 502.00,375.75 503.70,375.73 505.40,375.61 507.10,373.44 508.80,372.99 510.50,374.10 512.20,373.98 513.90,373.63 515.60,374.53 517.30,374.23 519.00,374.66 520.70,374.08 522.40,374.09 524.10,374.60 525.80,374.32 527.50,374.82 529.20,375.79 530.90,375.06 532.60,374.76 534.30,374.92 536.00,375.18 537.70,376.13 539.40,375.62 541.10,375.61 542.80,375.42 544.50,376.75 546.20,376.05 547.90,375.83 549.60,375.71 551.30,375.79 553.00,376.03 554.70,376.83 556.40,376.14 558.10,376.03 559.80,376.69 561.50,376.39 563.20,377.47 564.90,376.28 566.60,376.88 568.30,377.26 570.00,376.78 571.70,377.62 573.40,376.94 575.10,376.65 576.80,376.92 578.50,376.44 580.20,377.03 581.90,376.84 583.60,377.78 585.30,377.75 587.00,377.34 588.70,376.74 590.40,377.10 592.10,377.13 593.80,377.14 595.50,377.22 597.20,378.17 598.90,377.20 600.60,377.18 602.30,378.58 604.00,378.25 605.70,379.02" fill="none" stroke="#1616d8" stroke-width="1.150" stroke-linejoin="round"/>
<line x1="431.08" y1="374.40" x2="431.08" y2="468.700" stroke="#3a3ae0" stroke-width="1.100"/>
<line x1="509.88" y1="374.40" x2="509.88" y2="468.700" stroke="#3a3ae0" stroke-width="1.100"/>
<line x1="523.20" y1="374.40" x2="523.20" y2="468.700" stroke="#3a3ae0" stroke-width="1.100"/>
<line x1="524.53" y1="374.40" x2="524.53" y2="468.700" stroke="#3a3ae0" stroke-width="1.100"/>
<line x1="532.30" y1="374.40" x2="532.30" y2="468.700" stroke="#3a3ae0" stroke-width="1.100"/>
<line x1="535.85" y1="374.40" x2="535.85" y2="468.700" stroke="#3a3ae0" stroke-width="1.100"/>
<polyline points="245.52,356.64 245.52,466.51 246.85,463.19 247.29,356.64 248.62,356.64 249.51,469.40 257.06,463.19 257.28,398.81 257.28,444.32 260.61,443.65 261.72,440.99 262.39,450.98 263.27,436.55 264.16,445.43 265.49,442.10 268.16,443.65 269.93,440.99 271.04,446.54 272.60,437.66 273.71,447.65 274.37,443.65 286.58,443.65 286.80,355.75 297.90,355.53 298.12,360.63 298.35,355.53 313.44,355.53 313.66,470.29 319.88,462.52 320.32,445.43 322.10,443.65 334.31,442.99 348.07,442.32 348.73,432.11 349.40,445.43 350.51,440.99 351.18,448.76 352.29,438.77 353.40,445.43 354.73,440.99 356.50,443.21 358.28,442.10 359.17,451.64 360.06,438.32 361.17,445.43 362.28,442.76 362.72,358.86 364.27,354.86 364.70,356.00 365.40,352.00 366.60,353.20 370.00,354.60 373.60,355.80 373.90,356.00 374.60,352.00 375.80,353.20 380.80,354.60 386.00,355.80 386.30,356.00 387.00,352.00 388.20,353.20 393.20,354.60 398.40,355.80 398.70,356.00 399.40,352.00 400.60,353.20 405.80,354.60 411.20,355.80 411.50,356.00 412.20,352.00 413.40,353.20 419.20,354.60 425.20,355.80 425.50,356.00 426.20,352.00 427.40,353.20 432.85,354.60 438.50,355.80 438.80,356.00 439.50,352.00 440.70,353.20 446.15,354.60 451.80,355.80 452.10,356.00 452.80,352.00 454.00,353.20 459.40,354.60 465.00,355.80 465.30,356.00 466.00,352.00 467.20,353.20 472.40,354.60 477.80,355.80 478.10,356.00 478.80,352.00 480.00,353.20 485.15,354.60 490.50,355.80 490.80,356.00 491.50,352.00 492.70,353.20 497.90,354.60 503.30,355.80 503.60,356.00 504.30,352.00 505.50,353.20 510.75,354.60 516.20,355.80 516.50,356.00 517.20,352.00 518.40,353.20 524.10,354.60 530.00,355.80 530.30,356.00 531.00,352.00 532.20,353.20 537.40,354.60 542.80,355.80 543.10,356.00 543.80,352.00 545.00,353.20 550.15,354.60 555.50,355.80 555.80,356.00 556.50,352.00 557.70,353.20 563.15,354.60 568.80,355.80 569.10,356.00 569.80,352.00 571.00,353.20 577.60,354.60 584.40,355.80 584.70,356.00 585.40,352.00 586.60,353.20 590.35,354.60 594.30,355.80 594.60,356.00 595.30,352.00 596.50,353.20 600.90,354.60 605.50,355.80" fill="none" stroke="#62ad4b" stroke-width="1.100" stroke-linejoin="round"/>
<rect x="361.70" y="370.800" width="5.600" height="3.200" rx="0.800" fill="#50555e" opacity=".85"/>
<rect x="365.10" y="370.800" width="5.600" height="3.200" rx="0.800" fill="#50555e" opacity=".85"/>
<rect x="368.50" y="370.800" width="5.600" height="3.200" rx="0.800" fill="#50555e" opacity=".85"/>
<rect x="371.90" y="370.800" width="5.600" height="3.200" rx="0.800" fill="#50555e" opacity=".85"/>
<rect x="375.30" y="370.800" width="5.600" height="3.200" rx="0.800" fill="#50555e" opacity=".85"/>
<rect x="381.20" y="370.800" width="5.600" height="3.200" rx="0.800" fill="#50555e" opacity=".85"/>
<rect x="384.60" y="370.800" width="5.600" height="3.200" rx="0.800" fill="#50555e" opacity=".85"/>
<rect x="395.20" y="370.800" width="5.600" height="3.200" rx="0.800" fill="#50555e" opacity=".85"/>
<rect x="398.60" y="370.800" width="5.600" height="3.200" rx="0.800" fill="#50555e" opacity=".85"/>
<rect x="402.00" y="370.800" width="5.600" height="3.200" rx="0.800" fill="#50555e" opacity=".85"/>
<rect x="408.20" y="370.800" width="5.600" height="3.200" rx="0.800" fill="#50555e" opacity=".85"/>
<rect x="412.20" y="370.800" width="5.600" height="3.200" rx="0.800" fill="#50555e" opacity=".85"/>
<rect x="421.20" y="370.800" width="5.600" height="3.200" rx="0.800" fill="#50555e" opacity=".85"/>
<rect x="424.70" y="370.800" width="5.600" height="3.200" rx="0.800" fill="#50555e" opacity=".85"/>
<rect x="428.20" y="370.800" width="5.600" height="3.200" rx="0.800" fill="#50555e" opacity=".85"/>
<rect x="431.70" y="370.800" width="5.600" height="3.200" rx="0.800" fill="#50555e" opacity=".85"/>
<rect x="435.20" y="370.800" width="5.600" height="3.200" rx="0.800" fill="#50555e" opacity=".85"/>
<rect x="438.70" y="370.800" width="5.600" height="3.200" rx="0.800" fill="#50555e" opacity=".85"/>
<rect x="442.20" y="370.800" width="5.600" height="3.200" rx="0.800" fill="#50555e" opacity=".85"/>
<rect x="445.70" y="370.800" width="5.600" height="3.200" rx="0.800" fill="#50555e" opacity=".85"/>
<rect x="449.20" y="370.800" width="5.600" height="3.200" rx="0.800" fill="#50555e" opacity=".85"/>
<rect x="504.20" y="370.800" width="5.600" height="3.200" rx="0.800" fill="#50555e" opacity=".85"/>
<rect x="507.50" y="370.800" width="5.600" height="3.200" rx="0.800" fill="#50555e" opacity=".85"/>
<rect x="510.80" y="370.800" width="5.600" height="3.200" rx="0.800" fill="#50555e" opacity=".85"/>
<rect x="514.10" y="370.800" width="5.600" height="3.200" rx="0.800" fill="#50555e" opacity=".85"/>
<rect x="517.40" y="370.800" width="5.600" height="3.200" rx="0.800" fill="#50555e" opacity=".85"/>
<rect x="520.70" y="370.800" width="5.600" height="3.200" rx="0.800" fill="#50555e" opacity=".85"/>
<rect x="524.00" y="370.800" width="5.600" height="3.200" rx="0.800" fill="#50555e" opacity=".85"/>
<rect x="527.30" y="370.800" width="5.600" height="3.200" rx="0.800" fill="#50555e" opacity=".85"/>
<rect x="530.60" y="370.800" width="5.600" height="3.200" rx="0.800" fill="#50555e" opacity=".85"/>
<rect x="533.90" y="370.800" width="5.600" height="3.200" rx="0.800" fill="#50555e" opacity=".85"/>
<rect x="537.20" y="370.800" width="5.600" height="3.200" rx="0.800" fill="#50555e" opacity=".85"/>
<rect x="540.50" y="370.800" width="5.600" height="3.200" rx="0.800" fill="#50555e" opacity=".85"/>
<rect x="543.80" y="370.800" width="5.600" height="3.200" rx="0.800" fill="#50555e" opacity=".85"/>
<rect x="547.10" y="370.800" width="5.600" height="3.200" rx="0.800" fill="#50555e" opacity=".85"/>
<rect x="550.40" y="370.800" width="5.600" height="3.200" rx="0.800" fill="#50555e" opacity=".85"/>
<rect x="553.70" y="370.800" width="5.600" height="3.200" rx="0.800" fill="#50555e" opacity=".85"/>
<rect x="557.00" y="370.800" width="5.600" height="3.200" rx="0.800" fill="#50555e" opacity=".85"/>
<rect x="560.30" y="370.800" width="5.600" height="3.200" rx="0.800" fill="#50555e" opacity=".85"/>
<rect x="563.60" y="370.800" width="5.600" height="3.200" rx="0.800" fill="#50555e" opacity=".85"/>
<rect x="566.90" y="370.800" width="5.600" height="3.200" rx="0.800" fill="#50555e" opacity=".85"/>
<rect x="577.70" y="370.800" width="5.600" height="3.200" rx="0.800" fill="#50555e" opacity=".85"/>
<rect x="581.20" y="370.800" width="5.600" height="3.200" rx="0.800" fill="#50555e" opacity=".85"/>
<rect x="591.20" y="370.800" width="5.600" height="3.200" rx="0.800" fill="#50555e" opacity=".85"/>
<rect x="594.40" y="370.800" width="5.600" height="3.200" rx="0.800" fill="#50555e" opacity=".85"/>
<rect x="597.60" y="370.800" width="5.600" height="3.200" rx="0.800" fill="#50555e" opacity=".85"/>
<g fill="#f7c95a" opacity=".93">
<circle cx="364.50" cy="366" r="4.700"/>
<circle cx="367.90" cy="366" r="4.700"/>
<circle cx="371.30" cy="366" r="4.700"/>
<circle cx="374.70" cy="366" r="4.700"/>
<circle cx="378.10" cy="366" r="4.700"/>
<circle cx="384.00" cy="366" r="4.700"/>
<circle cx="387.40" cy="366" r="4.700"/>
<circle cx="398.00" cy="366" r="4.700"/>
<circle cx="401.40" cy="366" r="4.700"/>
<circle cx="404.80" cy="366" r="4.700"/>
<circle cx="411.00" cy="366" r="4.700"/>
<circle cx="415.00" cy="366" r="4.700"/>
<circle cx="424.00" cy="366" r="4.700"/>
<circle cx="427.50" cy="366" r="4.700"/>
<circle cx="431.00" cy="366" r="4.700"/>
<circle cx="434.50" cy="366" r="4.700"/>
<circle cx="438.00" cy="366" r="4.700"/>
<circle cx="441.50" cy="366" r="4.700"/>
<circle cx="445.00" cy="366" r="4.700"/>
<circle cx="448.50" cy="366" r="4.700"/>
<circle cx="452.00" cy="366" r="4.700"/>
<circle cx="507.00" cy="366" r="4.700"/>
<circle cx="510.30" cy="366" r="4.700"/>
<circle cx="513.60" cy="366" r="4.700"/>
<circle cx="516.90" cy="366" r="4.700"/>
<circle cx="520.20" cy="366" r="4.700"/>
<circle cx="523.50" cy="366" r="4.700"/>
<circle cx="526.80" cy="366" r="4.700"/>
<circle cx="530.10" cy="366" r="4.700"/>
<circle cx="533.40" cy="366" r="4.700"/>
<circle cx="536.70" cy="366" r="4.700"/>
<circle cx="540.00" cy="366" r="4.700"/>
<circle cx="543.30" cy="366" r="4.700"/>
<circle cx="546.60" cy="366" r="4.700"/>
<circle cx="549.90" cy="366" r="4.700"/>
<circle cx="553.20" cy="366" r="4.700"/>
<circle cx="556.50" cy="366" r="4.700"/>
<circle cx="559.80" cy="366" r="4.700"/>
<circle cx="563.10" cy="366" r="4.700"/>
<circle cx="566.40" cy="366" r="4.700"/>
<circle cx="569.70" cy="366" r="4.700"/>
<circle cx="580.50" cy="366" r="4.700"/>
<circle cx="584.00" cy="366" r="4.700"/>
<circle cx="594.00" cy="366" r="4.700"/>
<circle cx="597.20" cy="366" r="4.700"/>
<circle cx="600.40" cy="366" r="4.700"/>
</g>
<g fill="none" stroke="#fbe2a0" stroke-width="0.700">
<circle cx="364.50" cy="366" r="1.900"/>
<circle cx="371.30" cy="366" r="1.900"/>
<circle cx="378.10" cy="366" r="1.900"/>
<circle cx="387.40" cy="366" r="1.900"/>
<circle cx="401.40" cy="366" r="1.900"/>
<circle cx="411.00" cy="366" r="1.900"/>
<circle cx="424.00" cy="366" r="1.900"/>
<circle cx="431.00" cy="366" r="1.900"/>
<circle cx="438.00" cy="366" r="1.900"/>
<circle cx="445.00" cy="366" r="1.900"/>
<circle cx="452.00" cy="366" r="1.900"/>
<circle cx="510.30" cy="366" r="1.900"/>
<circle cx="516.90" cy="366" r="1.900"/>
<circle cx="523.50" cy="366" r="1.900"/>
<circle cx="530.10" cy="366" r="1.900"/>
<circle cx="536.70" cy="366" r="1.900"/>
<circle cx="543.30" cy="366" r="1.900"/>
<circle cx="549.90" cy="366" r="1.900"/>
<circle cx="556.50" cy="366" r="1.900"/>
<circle cx="563.10" cy="366" r="1.900"/>
<circle cx="569.70" cy="366" r="1.900"/>
<circle cx="584.00" cy="366" r="1.900"/>
<circle cx="597.20" cy="366" r="1.900"/>
</g>
<path d="M237.64 360.78h12.200v9.600l-6.100 4.800l-6.100-4.800z" fill="#f3c80d" stroke="#e0b400" stroke-width="0.300"/>
<rect x="242.99" y="363.18" width="1.500" height="5.800" fill="#222"/><rect x="242.99" y="370.08" width="1.500" height="1.500" fill="#222"/>
<path d="M254.51 378.09h12.200v9.600l-6.100 4.800l-6.100-4.800z" fill="#f3c80d" stroke="#e0b400" stroke-width="0.300"/>
<rect x="259.86" y="380.49" width="1.500" height="5.800" fill="#222"/><rect x="259.86" y="387.39" width="1.500" height="1.500" fill="#222"/>
<rect x="166.400" y="509.700" width="478.400" height="12.200" fill="#d9d9d9" stroke="#4b5468" stroke-width="0.800"/>
<rect x="173.500" y="514.700" width="16.500" height="2.200" fill="#111"/><text x="193" y="518.100" font-size="6.850" fill="#5a5a5a">Temperature</text>
<rect x="246" y="514.700" width="16.800" height="2.200" fill="#1616d8"/><text x="264.500" y="518.100" font-size="6.850" fill="#5a5a5a">Humidity</text>
<rect x="306.500" y="514.700" width="16.500" height="2.200" fill="#62ad4b"/><text x="325.300" y="518.100" font-size="6.850" fill="#5a5a5a">Probe Temp</text>
</svg>
<!-- mini map -->
<svg class="b" style="left:162.0px;top:549.6px;width:487.0px;height:114.0px" viewBox="162.0 549.6 487.0 114.0" font-family="Liberation Sans, sans-serif">
<defs><filter id="mb" x="-20%" y="-20%" width="140%" height="140%"><feGaussianBlur stdDeviation="5"/></filter>
<filter id="relief2" x="0" y="0" width="100%" height="100%"><feTurbulence type="fractalNoise" baseFrequency="0.16" numOctaves="3" seed="3" result="n"/><feDiffuseLighting in="n" surfaceScale="5" lighting-color="#fff" result="l"><feDistantLight azimuth="315" elevation="62"/></feDiffuseLighting><feComposite in="l" in2="SourceGraphic" operator="in"/></filter>
<clipPath id="mland"><path d="M155.0 670.0C117.0 667.0 153.8 655.6 155.0 652.0C156.2 648.4 159.9 650.4 161.9 648.6C163.9 646.8 165.3 643.3 167.1 641.2C168.9 639.0 170.8 637.5 172.6 635.6C174.5 633.8 175.7 632.2 178.2 630.1C180.7 627.9 184.4 625.2 187.4 622.7C190.5 620.2 194.2 617.6 196.7 615.3C199.2 613.0 199.8 610.7 202.2 608.8C204.7 607.0 208.7 605.7 211.5 604.2C214.3 602.7 216.7 600.6 218.9 599.9C221.1 599.3 222.6 599.8 224.4 600.5C226.3 601.2 227.5 603.5 230.0 604.2C232.5 604.9 235.5 604.4 239.2 604.6C242.9 604.7 247.6 605.5 252.2 605.1C256.8 604.7 263.0 603.2 267.0 602.3C271.0 601.5 272.5 601.2 276.2 600.1C279.9 599.0 284.6 596.7 289.2 595.9C293.8 595.0 300.0 595.7 304.0 594.9C308.0 594.2 310.8 592.2 313.2 591.2C315.7 590.3 317.1 589.0 318.8 589.0C320.5 589.0 322.8 590.0 323.4 591.2C324.0 592.5 322.0 595.3 322.5 596.8C322.9 598.3 325.4 599.8 326.2 600.5C327.0 601.2 325.4 600.7 327.1 601.2C328.9 601.7 333.2 603.3 336.7 603.6C340.2 603.8 344.4 603.4 347.9 602.8C351.3 602.1 354.8 600.9 357.4 599.6C360.1 598.2 363.7 598.4 363.8 594.8C364.0 591.2 358.4 581.9 358.2 577.9C358.1 573.9 361.0 573.9 363.0 570.7C365.0 567.5 368.0 562.1 370.2 558.7C372.4 555.3 375.0 552.7 376.2 550.3C377.4 548.0 344.7 546.1 377.4 544.4C410.0 542.6 538.9 539.2 572.0 540.0C605.1 540.8 575.0 544.0 576.0 549.0C577.0 554.0 576.9 564.6 578.0 570.0C579.0 575.4 580.6 577.8 582.2 581.4C583.9 584.9 588.4 588.9 587.9 591.3C587.4 593.7 582.0 593.7 579.4 595.6C576.8 597.5 574.2 599.8 572.3 602.7C570.4 605.5 569.2 609.5 568.0 612.6C566.8 615.7 567.1 618.7 565.2 621.1C563.3 623.5 559.5 624.9 556.7 626.8C553.8 628.7 550.5 630.7 548.2 632.5C545.8 634.2 544.4 636.9 542.5 637.4C540.6 638.0 537.3 637.3 536.8 636.0C536.3 634.7 538.9 631.9 539.6 629.6C540.3 627.4 540.6 624.9 541.1 622.5C541.5 620.2 541.5 617.6 542.5 615.4C543.4 613.3 545.3 611.9 546.7 609.8C548.2 607.6 550.0 604.5 551.0 602.7C551.9 600.8 552.9 599.3 552.4 598.4C551.9 597.5 549.8 597.0 548.2 597.0C546.5 597.0 544.1 597.2 542.5 598.4C540.8 599.6 539.6 602.4 538.2 604.1C536.8 605.7 534.9 606.9 534.0 608.3C533.0 609.8 532.4 610.9 532.5 612.6C532.7 614.3 534.7 616.5 534.7 618.3C534.7 620.0 533.6 622.5 532.5 623.2C531.5 624.0 529.2 623.6 528.3 622.5C527.3 621.5 527.8 618.3 526.9 616.9C525.9 615.4 524.5 614.3 522.6 614.0C520.7 613.8 517.9 614.7 515.5 615.4C513.1 616.1 510.5 616.9 508.4 618.3C506.3 619.7 503.4 622.1 502.7 624.0C502.0 625.8 503.5 627.5 504.1 629.6C504.7 631.8 506.5 634.1 506.3 636.7C506.0 639.3 504.5 642.4 502.7 645.3C500.9 648.1 497.7 652.4 495.6 653.8C493.5 655.2 491.1 655.0 489.9 653.8C488.8 652.6 488.4 649.3 488.5 646.7C488.6 644.1 489.9 640.8 490.6 638.2C491.4 635.5 492.9 632.9 492.8 631.1C492.7 629.2 491.4 627.0 489.9 626.8C488.5 626.6 485.9 628.2 484.3 629.6C482.6 631.1 482.1 633.6 480.0 635.3C477.9 637.1 474.0 638.1 471.8 640.1C469.6 642.1 468.5 644.9 467.0 647.3C465.5 649.7 463.7 653.8 462.7 654.5C461.7 655.2 462.7 651.7 461.2 651.4C459.6 651.2 456.1 652.8 453.2 653.0C450.3 653.3 446.5 653.2 443.6 653.0C440.7 652.9 438.0 652.5 435.6 652.2C433.2 652.0 431.6 651.2 429.2 651.4C426.9 651.7 424.2 652.9 421.3 653.8C418.3 654.8 412.8 657.2 411.7 657.0C410.6 656.9 413.3 654.0 414.9 653.0C416.5 652.1 419.0 652.0 421.3 651.4C423.5 650.9 427.7 650.9 428.5 649.8C429.2 648.8 427.8 646.2 426.1 645.1C424.3 643.9 420.5 643.9 418.1 642.7C415.7 641.5 414.1 638.7 411.7 637.9C409.3 637.1 405.2 637.1 403.7 637.9C402.3 638.7 403.2 641.1 402.9 642.7C402.7 644.3 402.7 647.7 402.1 647.4C401.6 647.2 400.4 643.5 399.7 641.1C399.1 638.7 398.8 634.6 398.1 633.1C397.5 631.5 397.2 631.3 395.7 631.8C394.3 632.3 391.1 634.5 389.4 636.3C387.6 638.1 386.3 640.3 385.4 642.7C384.4 645.1 384.2 646.9 383.8 650.6C383.4 654.4 383.1 661.8 383.0 665.0C382.8 668.2 421.0 669.2 383.0 670.0C345.0 670.8 193.0 673.0 155.0 670.0Z"/></clipPath></defs>
<rect x="162.0" y="549.6" width="487.0" height="114.0" fill="#abc8f0"/>
<path d="M155.0 670.0C117.0 667.0 153.8 655.6 155.0 652.0C156.2 648.4 159.9 650.4 161.9 648.6C163.9 646.8 165.3 643.3 167.1 641.2C168.9 639.0 170.8 637.5 172.6 635.6C174.5 633.8 175.7 632.2 178.2 630.1C180.7 627.9 184.4 625.2 187.4 622.7C190.5 620.2 194.2 617.6 196.7 615.3C199.2 613.0 199.8 610.7 202.2 608.8C204.7 607.0 208.7 605.7 211.5 604.2C214.3 602.7 216.7 600.6 218.9 599.9C221.1 599.3 222.6 599.8 224.4 600.5C226.3 601.2 227.5 603.5 230.0 604.2C232.5 604.9 235.5 604.4 239.2 604.6C242.9 604.7 247.6 605.5 252.2 605.1C256.8 604.7 263.0 603.2 267.0 602.3C271.0 601.5 272.5 601.2 276.2 600.1C279.9 599.0 284.6 596.7 289.2 595.9C293.8 595.0 300.0 595.7 304.0 594.9C308.0 594.2 310.8 592.2 313.2 591.2C315.7 590.3 317.1 589.0 318.8 589.0C320.5 589.0 322.8 590.0 323.4 591.2C324.0 592.5 322.0 595.3 322.5 596.8C322.9 598.3 325.4 599.8 326.2 600.5C327.0 601.2 325.4 600.7 327.1 601.2C328.9 601.7 333.2 603.3 336.7 603.6C340.2 603.8 344.4 603.4 347.9 602.8C351.3 602.1 354.8 600.9 357.4 599.6C360.1 598.2 363.7 598.4 363.8 594.8C364.0 591.2 358.4 581.9 358.2 577.9C358.1 573.9 361.0 573.9 363.0 570.7C365.0 567.5 368.0 562.1 370.2 558.7C372.4 555.3 375.0 552.7 376.2 550.3C377.4 548.0 344.7 546.1 377.4 544.4C410.0 542.6 538.9 539.2 572.0 540.0C605.1 540.8 575.0 544.0 576.0 549.0C577.0 554.0 576.9 564.6 578.0 570.0C579.0 575.4 580.6 577.8 582.2 581.4C583.9 584.9 588.4 588.9 587.9 591.3C587.4 593.7 582.0 593.7 579.4 595.6C576.8 597.5 574.2 599.8 572.3 602.7C570.4 605.5 569.2 609.5 568.0 612.6C566.8 615.7 567.1 618.7 565.2 621.1C563.3 623.5 559.5 624.9 556.7 626.8C553.8 628.7 550.5 630.7 548.2 632.5C545.8 634.2 544.4 636.9 542.5 637.4C540.6 638.0 537.3 637.3 536.8 636.0C536.3 634.7 538.9 631.9 539.6 629.6C540.3 627.4 540.6 624.9 541.1 622.5C541.5 620.2 541.5 617.6 542.5 615.4C543.4 613.3 545.3 611.9 546.7 609.8C548.2 607.6 550.0 604.5 551.0 602.7C551.9 600.8 552.9 599.3 552.4 598.4C551.9 597.5 549.8 597.0 548.2 597.0C546.5 597.0 544.1 597.2 542.5 598.4C540.8 599.6 539.6 602.4 538.2 604.1C536.8 605.7 534.9 606.9 534.0 608.3C533.0 609.8 532.4 610.9 532.5 612.6C532.7 614.3 534.7 616.5 534.7 618.3C534.7 620.0 533.6 622.5 532.5 623.2C531.5 624.0 529.2 623.6 528.3 622.5C527.3 621.5 527.8 618.3 526.9 616.9C525.9 615.4 524.5 614.3 522.6 614.0C520.7 613.8 517.9 614.7 515.5 615.4C513.1 616.1 510.5 616.9 508.4 618.3C506.3 619.7 503.4 622.1 502.7 624.0C502.0 625.8 503.5 627.5 504.1 629.6C504.7 631.8 506.5 634.1 506.3 636.7C506.0 639.3 504.5 642.4 502.7 645.3C500.9 648.1 497.7 652.4 495.6 653.8C493.5 655.2 491.1 655.0 489.9 653.8C488.8 652.6 488.4 649.3 488.5 646.7C488.6 644.1 489.9 640.8 490.6 638.2C491.4 635.5 492.9 632.9 492.8 631.1C492.7 629.2 491.4 627.0 489.9 626.8C488.5 626.6 485.9 628.2 484.3 629.6C482.6 631.1 482.1 633.6 480.0 635.3C477.9 637.1 474.0 638.1 471.8 640.1C469.6 642.1 468.5 644.9 467.0 647.3C465.5 649.7 463.7 653.8 462.7 654.5C461.7 655.2 462.7 651.7 461.2 651.4C459.6 651.2 456.1 652.8 453.2 653.0C450.3 653.3 446.5 653.2 443.6 653.0C440.7 652.9 438.0 652.5 435.6 652.2C433.2 652.0 431.6 651.2 429.2 651.4C426.9 651.7 424.2 652.9 421.3 653.8C418.3 654.8 412.8 657.2 411.7 657.0C410.6 656.9 413.3 654.0 414.9 653.0C416.5 652.1 419.0 652.0 421.3 651.4C423.5 650.9 427.7 650.9 428.5 649.8C429.2 648.8 427.8 646.2 426.1 645.1C424.3 643.9 420.5 643.9 418.1 642.7C415.7 641.5 414.1 638.7 411.7 637.9C409.3 637.1 405.2 637.1 403.7 637.9C402.3 638.7 403.2 641.1 402.9 642.7C402.7 644.3 402.7 647.7 402.1 647.4C401.6 647.2 400.4 643.5 399.7 641.1C399.1 638.7 398.8 634.6 398.1 633.1C397.5 631.5 397.2 631.3 395.7 631.8C394.3 632.3 391.1 634.5 389.4 636.3C387.6 638.1 386.3 640.3 385.4 642.7C384.4 645.1 384.2 646.9 383.8 650.6C383.4 654.4 383.1 661.8 383.0 665.0C382.8 668.2 421.0 669.2 383.0 670.0C345.0 670.8 193.0 673.0 155.0 670.0Z" fill="#f2f1ed"/>
<g clip-path="url(#mland)">
<g filter="url(#mb)" fill="#e6e5e1"><path d="M372 545L520 545L528 590L500 615L470 625L440 640L415 628L400 600L370 590Z"/><ellipse cx="240" cy="630" rx="55" ry="10" opacity=".6"/><ellipse cx="345" cy="640" rx="14" ry="22" opacity=".5"/><ellipse cx="497" cy="640" rx="6" ry="10" opacity=".6"/></g>
<g opacity=".2" style="mix-blend-mode:multiply"><path filter="url(#relief2)" d="M372 545L520 545L528 590L500 615L470 625L440 640L415 628L400 600L370 590Z" fill="#000"/></g>
<g fill="none" stroke="#a6dccb" stroke-width="0.900">
<path d="M170 640C200 625 230 640 260 630S300 640 330 635 360 640 383 625 400 615 420 630 450 640 470 630 500 620 520 610 540 600 545 595"/>
<path d="M218 605C225 625 230 640 228 663"/>
<path d="M252 606C250 630 258 650 262 663"/>
<path d="M290 596C292 620 300 640 305 648"/>
<path d="M378 552C380 580 390 600 396 628"/>
<path d="M420 550C430 580 440 600 470 605S510 600 540 592"/>
<path d="M470 550C480 570 490 590 500 615"/>
<path d="M545 595C550 575 560 560 575 552"/>
<path d="M330 602C335 620 340 640 345 663"/>
<path d="M190 628C200 640 205 655 204 663"/>
</g>
<g fill="none" stroke="#d8dadd" stroke-width="0.600">
<path d="M200 615C220 630 240 620 260 640"/>
<path d="M270 603C280 620 290 630 285 646"/>
<path d="M310 592C320 610 335 620 340 650"/>
<path d="M400 560C430 570 450 560 480 575"/>
<path d="M520 560C530 575 550 570 570 580"/>
<path d="M175 635C190 650 200 655 220 663"/>
<path d="M230 605C240 630 250 640 255 663"/>
</g>
</g>
<path d="M262.0 670.0C251.5 667.7 264.3 659.3 266.0 656.0C267.7 652.7 269.3 651.6 272.0 650.0C274.7 648.4 278.0 647.2 282.0 646.5C286.0 645.8 292.0 645.8 296.0 646.0C300.0 646.2 303.3 647.2 306.0 648.0C308.7 648.8 309.7 650.4 312.0 651.0C314.3 651.6 317.5 651.0 320.0 651.5C322.5 652.0 325.3 652.8 327.0 654.0C328.7 655.2 329.7 656.3 330.0 659.0C330.3 661.7 340.3 668.2 329.0 670.0C317.7 671.8 272.5 672.3 262.0 670.0Z" fill="#abc8f0"/>
<ellipse cx="313.500" cy="660" rx="2.200" ry="5" fill="#f2f1ed" transform="rotate(20 313.500 660)"/>
<path d="M363.8 605.2C365.3 604.6 368.3 604.8 369.4 606.0C370.5 607.2 371.1 610.1 370.2 612.3C369.3 614.6 365.7 617.5 363.8 619.5C362.0 621.5 360.5 623.2 359.0 624.3C357.6 625.5 355.8 626.6 355.1 626.4C354.3 626.1 353.7 624.5 354.3 622.7C354.8 620.9 357.2 617.8 358.2 615.5C359.3 613.3 359.7 610.9 360.6 609.1C361.6 607.4 362.4 605.7 363.8 605.2Z" fill="#abc8f0"/>
<g fill="#f2f1ed"><ellipse cx="229.600" cy="559.800" rx="5" ry="5.400"/><ellipse cx="218.900" cy="569.600" rx="3.500" ry="2.600"/><ellipse cx="518" cy="647.800" rx="2" ry="3"/></g>
<text x="218.5" y="614.4" font-size="6.8" fill="#555" text-anchor="middle" stroke="#f3f1ec" stroke-width="1.200" paint-order="stroke">Matsue</text>
<text x="246.6" y="611.4" font-size="5.6" fill="#777" text-anchor="middle" stroke="#f3f1ec" stroke-width="1.200" paint-order="stroke">TOTTORI</text>
<text x="288.3" y="606.6" font-size="6.8" fill="#555" text-anchor="middle" stroke="#f3f1ec" stroke-width="1.200" paint-order="stroke">Tottori</text>
<text x="190.2" y="629.7" font-size="5.6" fill="#777" text-anchor="middle" stroke="#f3f1ec" stroke-width="1.200" paint-order="stroke">SHIMANE</text>
<text x="206.0" y="652.4" font-size="5.6" fill="#777" text-anchor="middle" stroke="#f3f1ec" stroke-width="1.200" paint-order="stroke">HIROSHIMA</text>
<text x="259.6" y="648.9" font-size="7.0" fill="#444" text-anchor="middle" stroke="#f3f1ec" stroke-width="1.200" paint-order="stroke">Okayama</text>
<text x="263.3" y="665.6" font-size="6.2" fill="#666" text-anchor="middle" stroke="#f3f1ec" stroke-width="1.200" paint-order="stroke">Takamatsu</text>
<text x="320.0" y="659.7" font-size="6.8" fill="#555" text-anchor="middle" stroke="#f3f1ec" stroke-width="1.200" paint-order="stroke">Kobe</text>
<text x="332.7" y="613.0" font-size="5.6" fill="#777" text-anchor="middle" stroke="#f3f1ec" stroke-width="1.200" paint-order="stroke">KYOTO</text>
<text x="349.5" y="659.7" font-size="6.8" fill="#555" text-anchor="middle" stroke="#f3f1ec" stroke-width="1.200" paint-order="stroke">Nara</text>
<text x="393.7" y="603.9" font-size="6.8" fill="#555" text-anchor="middle" stroke="#f3f1ec" stroke-width="1.200" paint-order="stroke">Gifu</text>
<text x="400.8" y="618.8" font-size="7.0" fill="#555" text-anchor="middle" stroke="#f3f1ec" stroke-width="1.200" paint-order="stroke">Nagoya</text>
<text x="364.7" y="587.5" font-size="5.6" fill="#777" text-anchor="middle" stroke="#f3f1ec" stroke-width="1.200" paint-order="stroke">FUKUI</text>
<text x="403.7" y="589.4" font-size="5.6" fill="#777" text-anchor="middle" stroke="#f3f1ec" stroke-width="1.200" paint-order="stroke">GIFU-KEN</text>
<text x="455.0" y="575.0" font-size="5.6" fill="#777" text-anchor="middle" stroke="#f3f1ec" stroke-width="1.200" paint-order="stroke">NAGANO</text>
<text x="479.0" y="590.6" font-size="6.8" fill="#555" text-anchor="middle" stroke="#f3f1ec" stroke-width="1.200" paint-order="stroke">Kofu</text>
<text x="483.0" y="601.4" font-size="5.6" fill="#777" text-anchor="middle" stroke="#f3f1ec" stroke-width="1.200" paint-order="stroke">YAMANASHI</text>
<text x="491.0" y="558.1" font-size="6.0" fill="#666" text-anchor="middle" stroke="#f3f1ec" stroke-width="1.200" paint-order="stroke">Nagano</text>
<text x="569.0" y="570.7" font-size="4.8" fill="#888" text-anchor="middle" stroke="#f3f1ec" stroke-width="1.200" paint-order="stroke">TOCHIGI</text>
<text x="384.0" y="664.9" font-size="5.5" fill="#777" text-anchor="middle" stroke="#f3f1ec" stroke-width="1.200" paint-order="stroke">Mie</text>
<circle cx="218.5" cy="606.0" r="0.700" fill="#555"/>
<circle cx="274.4" cy="604.6" r="0.700" fill="#555"/>
<circle cx="260.0" cy="653.2" r="0.700" fill="#555"/>
<circle cx="320.1" cy="650.8" r="0.700" fill="#555"/>
<circle cx="349.5" cy="651.4" r="0.700" fill="#555"/>
<circle cx="394.1" cy="608.7" r="0.700" fill="#555"/>
<circle cx="400.8" cy="623.0" r="0.700" fill="#555"/>
<circle cx="479.0" cy="594.1" r="0.700" fill="#555"/>
<rect x="283.6" y="629.2" width="19.0" height="5.5" fill="#f4511e"/>
<rect x="331.9" y="633.9" width="21.0" height="5.5" fill="#f4511e"/>
<rect x="465.2" y="631.2" width="8.0" height="5.5" fill="#f4511e"/>
<rect x="464.6" y="631.0" width="15.0" height="5.5" fill="#f4511e"/>
<g fill="#f5364e">
<circle cx="265.5" cy="630.5" r="3"/>
<circle cx="265.5" cy="630.5" r="2.750"/>
<circle cx="270.7" cy="631.6" r="2.750"/>
<circle cx="274.4" cy="632.3" r="2.750"/>
<circle cx="278.1" cy="633.4" r="2.750"/>
<circle cx="281.8" cy="633.4" r="2.750"/>
<circle cx="284.6" cy="635.6" r="2.750"/>
<circle cx="285.5" cy="632.3" r="2.750"/>
<circle cx="289.2" cy="633.1" r="2.750"/>
<circle cx="292.9" cy="634.2" r="2.750"/>
<circle cx="297.5" cy="633.8" r="2.750"/>
<circle cx="302.1" cy="635.3" r="2.750"/>
<circle cx="306.8" cy="636.4" r="2.750"/>
<circle cx="311.4" cy="637.5" r="2.750"/>
<circle cx="316.0" cy="639.0" r="2.750"/>
<circle cx="320.6" cy="640.8" r="2.750"/>
<circle cx="325.3" cy="642.7" r="2.750"/>
<circle cx="329.9" cy="644.0" r="2.750"/>
<circle cx="333.6" cy="644.5" r="2.750"/>
<circle cx="300.0" cy="635.5" r="2.750"/>
<circle cx="304.8" cy="637.1" r="2.750"/>
<circle cx="308.0" cy="637.5" r="2.750"/>
<circle cx="311.2" cy="637.9" r="2.750"/>
<circle cx="314.4" cy="639.1" r="2.750"/>
<circle cx="317.6" cy="640.3" r="2.750"/>
<circle cx="320.7" cy="641.5" r="2.750"/>
<circle cx="323.9" cy="642.7" r="2.750"/>
<circle cx="328.7" cy="644.3" r="2.750"/>
<circle cx="334.3" cy="644.3" r="2.750"/>
<circle cx="339.9" cy="642.7" r="2.750"/>
<circle cx="343.1" cy="641.9" r="2.750"/>
<circle cx="346.3" cy="641.1" r="2.750"/>
<circle cx="348.7" cy="639.1" r="2.750"/>
<circle cx="351.1" cy="637.1" r="2.750"/>
<circle cx="355.8" cy="634.7" r="2.750"/>
<circle cx="360.6" cy="637.1" r="2.750"/>
<circle cx="365.4" cy="637.9" r="2.750"/>
<circle cx="370.2" cy="637.9" r="2.750"/>
<circle cx="375.0" cy="637.9" r="2.750"/>
<circle cx="379.0" cy="636.3" r="2.750"/>
<circle cx="381.4" cy="632.8" r="2.750"/>
<circle cx="384.6" cy="630.7" r="2.750"/>
<circle cx="389.4" cy="631.2" r="2.750"/>
<circle cx="393.3" cy="630.7" r="2.750"/>
<circle cx="396.5" cy="629.9" r="2.750"/>
<circle cx="400.5" cy="629.6" r="2.750"/>
<circle cx="405.3" cy="630.2" r="2.750"/>
<circle cx="410.1" cy="630.7" r="2.750"/>
<circle cx="413.3" cy="632.3" r="2.750"/>
<circle cx="414.1" cy="635.5" r="2.750"/>
<circle cx="416.5" cy="638.7" r="2.750"/>
<circle cx="418.9" cy="640.7" r="2.750"/>
<circle cx="422.9" cy="641.9" r="2.750"/>
<circle cx="427.7" cy="642.7" r="2.750"/>
<circle cx="431.6" cy="643.9" r="2.750"/>
<circle cx="435.6" cy="646.2" r="2.750"/>
<circle cx="440.4" cy="647.1" r="2.750"/>
<circle cx="443.6" cy="647.1" r="2.750"/>
<circle cx="447.6" cy="646.6" r="2.750"/>
<circle cx="453.2" cy="646.6" r="2.750"/>
<circle cx="456.4" cy="647.0" r="2.750"/>
<circle cx="459.6" cy="647.4" r="2.750"/>
<circle cx="463.6" cy="645.1" r="2.750"/>
<circle cx="466.7" cy="641.1" r="2.750"/>
<circle cx="468.3" cy="637.1" r="2.750"/>
<circle cx="469.1" cy="633.9" r="2.750"/>
<circle cx="473.1" cy="632.3" r="2.750"/>
<circle cx="477.1" cy="629.9" r="2.750"/>
<circle cx="480.0" cy="626.8" r="2.750"/>
<circle cx="482.8" cy="623.2" r="2.750"/>
<circle cx="486.7" cy="624.0" r="2.750"/>
<circle cx="490.6" cy="624.7" r="2.750"/>
<circle cx="492.1" cy="619.0" r="2.750"/>
<circle cx="495.6" cy="621.8" r="2.750"/>
<circle cx="497.0" cy="617.9" r="2.750"/>
<circle cx="498.5" cy="614.0" r="2.750"/>
<circle cx="501.3" cy="611.9" r="2.750"/>
<circle cx="504.8" cy="611.9" r="2.750"/>
<circle cx="507.0" cy="614.0" r="2.750"/>
<circle cx="510.2" cy="613.0" r="2.750"/>
<circle cx="513.4" cy="611.9" r="2.750"/>
<circle cx="516.9" cy="608.3" r="2.750"/>
<circle cx="521.2" cy="605.5" r="2.750"/>
<circle cx="524.0" cy="603.4" r="2.750"/>
<circle cx="525.4" cy="600.2" r="2.750"/>
<circle cx="526.9" cy="597.0" r="2.750"/>
<circle cx="527.1" cy="600.8" r="2.750"/>
<circle cx="527.3" cy="604.5" r="2.750"/>
<circle cx="527.6" cy="608.3" r="2.750"/>
<circle cx="529.7" cy="612.6" r="2.750"/>
<circle cx="529.0" cy="616.9" r="2.750"/>
<circle cx="528.3" cy="621.1" r="2.750"/>
<circle cx="531.1" cy="619.7" r="2.750"/>
<circle cx="530.4" cy="616.1" r="2.750"/>
<circle cx="529.7" cy="612.6" r="2.750"/>
<circle cx="527.6" cy="608.3" r="2.750"/>
<circle cx="530.0" cy="605.5" r="2.750"/>
<circle cx="532.5" cy="602.7" r="2.750"/>
<circle cx="535.4" cy="603.4" r="2.750"/>
<circle cx="538.2" cy="601.9" r="2.750"/>
</g>
<text x="300" y="636" font-size="4" fill="#ffe3d8" font-weight="bold" text-anchor="middle">377</text><text x="343" y="638.800" font-size="4" fill="#ffe3d8" font-weight="bold" text-anchor="middle">87</text>
<rect x="528.300" y="580" width="20.600" height="6.800" rx="1.200" fill="#f4511e"/>
<text x="538.600" y="585.400" font-size="4.800" fill="#ffe0d2" font-weight="bold" text-anchor="middle">328</text>
<rect x="529.700" y="587" width="11.300" height="14.200" fill="#f6cf10"/>
<rect x="541" y="593.400" width="7.900" height="5.700" rx="1" fill="#f4701e"/>
<text x="543.500" y="598" font-size="4" fill="#ffe0d2" font-weight="bold">6</text>
<rect x="536" y="591" width="2.200" height="10.200" fill="#111"/>
<circle cx="536.800" cy="589.600" r="3.900" fill="#2a9a3a"/>
<path d="M529.500 602.500l2.500 4.500" stroke="#f6ee35" stroke-width="2.400" stroke-linecap="round"/>
</svg>
<svg class="b" style="left:486.30px;top:556.50px;width:14.00px;height:14.00px" viewBox="-10 -10 20 20"><circle r="9" fill="#fff" stroke="#333" stroke-width="1.200"/><path d="M-3 -4.500A5.200 5.200 0 1 0 3 -4.500" fill="none" stroke="#333" stroke-width="1.300"/><path d="M0.500 -6.500l3 2-3.200 1.500z" fill="#333"/></svg>
<svg class="b" style="left:505.50px;top:556.50px;width:14.00px;height:14.00px" viewBox="-10 -10 20 20"><circle r="9" fill="#fff" stroke="#333" stroke-width="1.200"/><path d="M-5 0h10" stroke="#333" stroke-width="1.200"/></svg>
<svg class="b" style="left:526.30px;top:556.50px;width:14.00px;height:14.00px" viewBox="-10 -10 20 20"><circle r="9" fill="#fff" stroke="#333" stroke-width="1.200"/><path d="M-5 0h10M0 -5v10" stroke="#333" stroke-width="1.200"/></svg>
<div class="b" style="left:545.50px;top:555.80px;width:52.00px;height:15.00px;background:#fff;border:1px solid #222;border-radius:8px;box-sizing:border-box;"></div>
<svg class="b" style="left:552px;top:559.500px;width:8px;height:8px" viewBox="0 0 12 12"><circle cx="6" cy="6" r="5" fill="#eadada" stroke="#b9a9a9" stroke-width="1"/><path d="M2 3l8 6" stroke="#c9a9a9" stroke-width="1.500"/></svg>
<span class="t" style="transform-origin:0 0;transform:translate(564.30px,559.87px) scale(0.1250,0.1250) rotate(0.25deg);font-size:55.20px;color:#333;">Road</span>
<svg class="b" style="left:583.500px;top:562px;width:5.500px;height:3.500px" viewBox="0 0 10 6"><path d="M0 0h10l-5 6z" fill="#222"/></svg>
<div class="b" style="left:606.30px;top:556.80px;width:37.10px;height:12.70px;background:#fff;border:1px solid #222;border-radius:7px;box-sizing:border-box;"></div>
<span class="t" style="transform-origin:50% 0;transform:translate(624.90px,559.57px) translateX(-50%) scale(0.1250,0.1250) rotate(0.25deg);font-size:55.28px;color:#333;">Icon Info</span>
</body></html>
